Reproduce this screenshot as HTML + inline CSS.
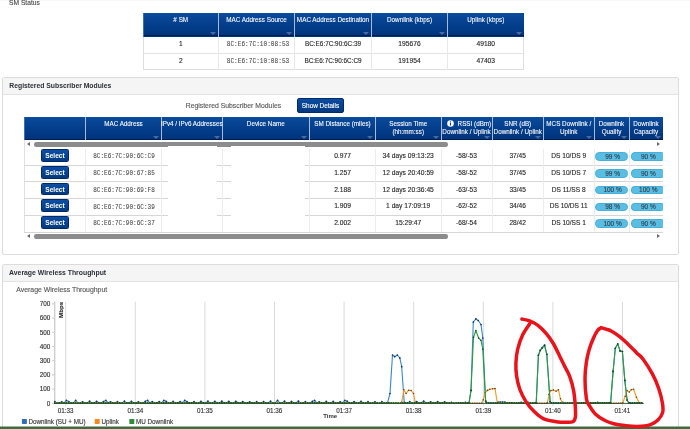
<!DOCTYPE html>
<html><head><meta charset="utf-8"><style>
*{box-sizing:border-box;margin:0;padding:0}
html,body{width:690px;height:429px;overflow:hidden;background:#fff;font-family:"Liberation Sans",sans-serif;color:#333}
body{position:relative}
.a{position:absolute}
.t{position:absolute;white-space:nowrap;line-height:1}
</style></head><body>
<div style="position:absolute;left:0;top:0;width:690px;height:429px;filter:blur(0.45px)">
<div class="a" style="left:0.00px;top:0.00px;width:690.00px;height:1.00px;background:#f7f7f7;"></div>
<div class="t" style="left:9.00px;top:0.08px;font-size:6.7px;color:#4a4a4a;font-weight:normal;font-family:'Liberation Sans';-webkit-text-stroke:0.12px #4a4a4a;">SM Status</div>
<div class="a" style="left:143.00px;top:13.00px;width:381.00px;height:23.50px;background:linear-gradient(#0a4b9c,#033e8b 50%,#00337b);"></div>
<div class="a" style="left:143.00px;top:13.00px;width:381.00px;height:1.00px;background:#0a4e9f;"></div>
<div class="a" style="left:143.00px;top:35.10px;width:381.00px;height:1.40px;background:#001c55;"></div>
<div class="a" style="left:143.00px;top:13.00px;width:1.00px;height:23.50px;background:#3f6fb0;"></div>
<div class="a" style="left:218.00px;top:13.00px;width:1.00px;height:23.50px;background:#a9bad6;"></div>
<div class="a" style="left:294.00px;top:13.00px;width:1.00px;height:23.50px;background:#a9bad6;"></div>
<div class="a" style="left:371.00px;top:13.00px;width:1.00px;height:23.50px;background:#a9bad6;"></div>
<div class="a" style="left:447.00px;top:13.00px;width:1.00px;height:23.50px;background:#a9bad6;"></div>
<div class="a" style="left:210.00px;top:32.00px;width:0;height:0;border-left:3px solid transparent;border-right:3px solid transparent;border-top:3px solid #4a6aa0"></div>
<div class="a" style="left:286.00px;top:32.00px;width:0;height:0;border-left:3px solid transparent;border-right:3px solid transparent;border-top:3px solid #4a6aa0"></div>
<div class="a" style="left:363.00px;top:32.00px;width:0;height:0;border-left:3px solid transparent;border-right:3px solid transparent;border-top:3px solid #4a6aa0"></div>
<div class="a" style="left:439.00px;top:32.00px;width:0;height:0;border-left:3px solid transparent;border-right:3px solid transparent;border-top:3px solid #4a6aa0"></div>
<div class="a" style="left:515.50px;top:32.00px;width:0;height:0;border-left:3px solid transparent;border-right:3px solid transparent;border-top:3px solid #4a6aa0"></div>
<div class="t" style="left:-19.25px;width:400px;text-align:center;top:16.75px;font-size:6.35px;color:#fff;font-weight:normal;font-family:'Liberation Sans';-webkit-text-stroke:0.08px #fff;"># SM</div>
<div class="t" style="left:56.50px;width:400px;text-align:center;top:16.75px;font-size:6.35px;color:#fff;font-weight:normal;font-family:'Liberation Sans';-webkit-text-stroke:0.08px #fff;">MAC Address Source</div>
<div class="t" style="left:133.00px;width:400px;text-align:center;top:16.75px;font-size:6.35px;color:#fff;font-weight:normal;font-family:'Liberation Sans';-webkit-text-stroke:0.08px #fff;">MAC Address Destination</div>
<div class="t" style="left:209.50px;width:400px;text-align:center;top:16.75px;font-size:6.35px;color:#fff;font-weight:normal;font-family:'Liberation Sans';-webkit-text-stroke:0.08px #fff;">Downlink (kbps)</div>
<div class="t" style="left:285.75px;width:400px;text-align:center;top:16.75px;font-size:6.35px;color:#fff;font-weight:normal;font-family:'Liberation Sans';-webkit-text-stroke:0.08px #fff;">Uplink (kbps)</div>
<div class="a" style="left:143.00px;top:36.50px;width:381.00px;height:33.50px;border:1px solid #dedede;border-top:none;"></div>
<div class="a" style="left:143.00px;top:53.00px;width:381.00px;height:1.00px;background:#e3e3e3;"></div>
<div class="a" style="left:218.00px;top:36.50px;width:1.00px;height:33.50px;background:#e8e8e8;"></div>
<div class="a" style="left:294.00px;top:36.50px;width:1.00px;height:33.50px;background:#e8e8e8;"></div>
<div class="a" style="left:371.00px;top:36.50px;width:1.00px;height:33.50px;background:#e8e8e8;"></div>
<div class="a" style="left:447.00px;top:36.50px;width:1.00px;height:33.50px;background:#e8e8e8;"></div>
<div class="t" style="left:-19.25px;width:400px;text-align:center;top:41.23px;font-size:6.6px;color:#262626;font-weight:normal;font-family:'Liberation Sans';-webkit-text-stroke:0.12px #262626;">1</div>
<div class="t" style="left:57.50px;width:400px;text-align:center;top:41.34px;font-size:7.0px;color:#444;font-weight:normal;font-family:'Liberation Mono';transform:scaleX(0.875);-webkit-text-stroke:0.06px #444;">8C:E6:7C:10:08:53</div>
<div class="t" style="left:133.00px;width:400px;text-align:center;top:41.33px;font-size:6.4px;color:#262626;font-weight:normal;font-family:'Liberation Sans';-webkit-text-stroke:0.12px #262626;">BC:E6:7C:90:6C:39</div>
<div class="t" style="left:209.50px;width:400px;text-align:center;top:41.18px;font-size:6.7px;color:#262626;font-weight:normal;font-family:'Liberation Sans';-webkit-text-stroke:0.12px #262626;">195676</div>
<div class="t" style="left:285.75px;width:400px;text-align:center;top:41.18px;font-size:6.7px;color:#262626;font-weight:normal;font-family:'Liberation Sans';-webkit-text-stroke:0.12px #262626;">49180</div>
<div class="t" style="left:-19.25px;width:400px;text-align:center;top:57.93px;font-size:6.6px;color:#262626;font-weight:normal;font-family:'Liberation Sans';-webkit-text-stroke:0.12px #262626;">2</div>
<div class="t" style="left:57.50px;width:400px;text-align:center;top:58.04px;font-size:7.0px;color:#444;font-weight:normal;font-family:'Liberation Mono';transform:scaleX(0.875);-webkit-text-stroke:0.06px #444;">8C:E6:7C:10:08:53</div>
<div class="t" style="left:133.00px;width:400px;text-align:center;top:58.03px;font-size:6.4px;color:#262626;font-weight:normal;font-family:'Liberation Sans';-webkit-text-stroke:0.12px #262626;">BC:E6:7C:90:6C:C9</div>
<div class="t" style="left:209.50px;width:400px;text-align:center;top:57.88px;font-size:6.7px;color:#262626;font-weight:normal;font-family:'Liberation Sans';-webkit-text-stroke:0.12px #262626;">191954</div>
<div class="t" style="left:285.75px;width:400px;text-align:center;top:57.88px;font-size:6.7px;color:#262626;font-weight:normal;font-family:'Liberation Sans';-webkit-text-stroke:0.12px #262626;">47403</div>
<div class="a" style="left:1.50px;top:77.00px;width:677.00px;height:178.00px;border:1px solid #dcdcdc;border-radius:2px;background:#fff;"></div>
<div class="a" style="left:2.50px;top:78.00px;width:675.00px;height:16.50px;background:#f5f5f5;border-bottom:1px solid #e3e3e3;"></div>
<div class="t" style="left:9.30px;top:83.24px;font-size:6.8px;color:#2a2f38;font-weight:bold;font-family:'Liberation Sans';">Registered Subscriber Modules</div>
<div class="t" style="left:185.70px;top:102.71px;font-size:6.85px;color:#555;font-weight:normal;font-family:'Liberation Sans';-webkit-text-stroke:0.12px #555;">Registered Subscriber Modules</div>
<div class="a" style="left:296.70px;top:98.20px;width:47.70px;height:15.00px;background:linear-gradient(#0b4da2,#03397f);border:1px solid #002a68;border-radius:2px;"></div>
<div class="t" style="left:120.50px;width:400px;text-align:center;top:102.73px;font-size:6.4px;color:#fff;font-weight:normal;font-family:'Liberation Sans';-webkit-text-stroke:0.12px #fff;">Show Details</div>
<div class="a" style="left:24.00px;top:117.00px;width:639.00px;height:23.00px;background:linear-gradient(#0a4b9c,#033e8b 50%,#00337b);"></div>
<div class="a" style="left:24.00px;top:117.00px;width:639.00px;height:1.00px;background:#0a4e9f;"></div>
<div class="a" style="left:24.00px;top:138.60px;width:639.00px;height:1.40px;background:#001c55;"></div>
<div class="a" style="left:24.00px;top:117.00px;width:1.00px;height:23.00px;background:#3f6fb0;"></div>
<div class="a" style="left:85.00px;top:117.00px;width:1.00px;height:23.00px;background:#a9bad6;"></div>
<div class="a" style="left:161.00px;top:117.00px;width:1.00px;height:23.00px;background:#a9bad6;"></div>
<div class="a" style="left:221.50px;top:117.00px;width:1.00px;height:23.00px;background:#a9bad6;"></div>
<div class="a" style="left:309.00px;top:117.00px;width:1.00px;height:23.00px;background:#a9bad6;"></div>
<div class="a" style="left:375.00px;top:117.00px;width:1.00px;height:23.00px;background:#a9bad6;"></div>
<div class="a" style="left:440.50px;top:117.00px;width:1.00px;height:23.00px;background:#a9bad6;"></div>
<div class="a" style="left:491.50px;top:117.00px;width:1.00px;height:23.00px;background:#a9bad6;"></div>
<div class="a" style="left:543.00px;top:117.00px;width:1.00px;height:23.00px;background:#a9bad6;"></div>
<div class="a" style="left:593.50px;top:117.00px;width:1.00px;height:23.00px;background:#a9bad6;"></div>
<div class="a" style="left:628.50px;top:117.00px;width:1.00px;height:23.00px;background:#a9bad6;"></div>
<div class="a" style="left:153.00px;top:135.50px;width:0;height:0;border-left:3px solid transparent;border-right:3px solid transparent;border-top:3px solid #4a6aa0"></div>
<div class="a" style="left:213.50px;top:135.50px;width:0;height:0;border-left:3px solid transparent;border-right:3px solid transparent;border-top:3px solid #4a6aa0"></div>
<div class="a" style="left:301.00px;top:135.50px;width:0;height:0;border-left:3px solid transparent;border-right:3px solid transparent;border-top:3px solid #4a6aa0"></div>
<div class="a" style="left:367.00px;top:135.50px;width:0;height:0;border-left:3px solid transparent;border-right:3px solid transparent;border-top:3px solid #4a6aa0"></div>
<div class="a" style="left:432.50px;top:135.50px;width:0;height:0;border-left:3px solid transparent;border-right:3px solid transparent;border-top:3px solid #4a6aa0"></div>
<div class="a" style="left:483.50px;top:135.50px;width:0;height:0;border-left:3px solid transparent;border-right:3px solid transparent;border-top:3px solid #4a6aa0"></div>
<div class="a" style="left:535.00px;top:135.50px;width:0;height:0;border-left:3px solid transparent;border-right:3px solid transparent;border-top:3px solid #4a6aa0"></div>
<div class="a" style="left:585.50px;top:135.50px;width:0;height:0;border-left:3px solid transparent;border-right:3px solid transparent;border-top:3px solid #4a6aa0"></div>
<div class="a" style="left:620.50px;top:135.50px;width:0;height:0;border-left:3px solid transparent;border-right:3px solid transparent;border-top:3px solid #4a6aa0"></div>
<div class="a" style="left:654.50px;top:135.50px;width:0;height:0;border-left:3px solid transparent;border-right:3px solid transparent;border-top:3px solid #4a6aa0"></div>
<div class="t" style="left:-76.50px;width:400px;text-align:center;top:120.68px;font-size:6.3px;color:#fff;font-weight:normal;font-family:'Liberation Sans';-webkit-text-stroke:0.08px #fff;">MAC Address</div>
<div class="t" style="left:-8.25px;width:400px;text-align:center;top:120.68px;font-size:6.3px;color:#fff;font-weight:normal;font-family:'Liberation Sans';-webkit-text-stroke:0.08px #fff;">IPv4 / IPv6 Addresses</div>
<div class="t" style="left:65.75px;width:400px;text-align:center;top:120.68px;font-size:6.3px;color:#fff;font-weight:normal;font-family:'Liberation Sans';-webkit-text-stroke:0.08px #fff;">Device Name</div>
<div class="t" style="left:142.50px;width:400px;text-align:center;top:120.68px;font-size:6.3px;color:#fff;font-weight:normal;font-family:'Liberation Sans';-webkit-text-stroke:0.08px #fff;">SM Distance (miles)</div>
<div class="t" style="left:208.25px;width:400px;text-align:center;top:120.68px;font-size:6.3px;color:#fff;font-weight:normal;font-family:'Liberation Sans';-webkit-text-stroke:0.08px #fff;">Session Time</div>
<div class="t" style="left:208.25px;width:400px;text-align:center;top:129.18px;font-size:6.3px;color:#fff;font-weight:normal;font-family:'Liberation Sans';-webkit-text-stroke:0.08px #fff;">(hh:mm:ss)</div>
<div class="t" style="left:457.60px;top:120.68px;font-size:6.3px;color:#fff;font-weight:normal;font-family:'Liberation Sans';-webkit-text-stroke:0.08px #fff;">RSSI (dBm)</div>
<div class="t" style="left:266.50px;width:400px;text-align:center;top:129.18px;font-size:6.3px;color:#fff;font-weight:normal;font-family:'Liberation Sans';-webkit-text-stroke:0.08px #fff;">Downlink / Uplink</div>
<div class="t" style="left:317.75px;width:400px;text-align:center;top:120.68px;font-size:6.3px;color:#fff;font-weight:normal;font-family:'Liberation Sans';-webkit-text-stroke:0.08px #fff;">SNR (dB)</div>
<div class="t" style="left:317.75px;width:400px;text-align:center;top:129.18px;font-size:6.3px;color:#fff;font-weight:normal;font-family:'Liberation Sans';-webkit-text-stroke:0.08px #fff;">Downlink / Uplink</div>
<div class="t" style="left:368.75px;width:400px;text-align:center;top:120.68px;font-size:6.3px;color:#fff;font-weight:normal;font-family:'Liberation Sans';-webkit-text-stroke:0.08px #fff;">MCS Downlink /</div>
<div class="t" style="left:368.75px;width:400px;text-align:center;top:129.18px;font-size:6.3px;color:#fff;font-weight:normal;font-family:'Liberation Sans';-webkit-text-stroke:0.08px #fff;">Uplink</div>
<div class="t" style="left:411.50px;width:400px;text-align:center;top:120.68px;font-size:6.3px;color:#fff;font-weight:normal;font-family:'Liberation Sans';-webkit-text-stroke:0.08px #fff;">Downlink</div>
<div class="t" style="left:411.50px;width:400px;text-align:center;top:129.18px;font-size:6.3px;color:#fff;font-weight:normal;font-family:'Liberation Sans';-webkit-text-stroke:0.08px #fff;">Quality</div>
<div class="t" style="left:446.00px;width:400px;text-align:center;top:120.68px;font-size:6.3px;color:#fff;font-weight:normal;font-family:'Liberation Sans';-webkit-text-stroke:0.08px #fff;">Downlink</div>
<div class="t" style="left:446.00px;width:400px;text-align:center;top:129.18px;font-size:6.3px;color:#fff;font-weight:normal;font-family:'Liberation Sans';-webkit-text-stroke:0.08px #fff;">Capacity</div>
<svg class="a" style="left:446.8px;top:120.4px" width="7" height="7" viewBox="0 0 14 14"><circle cx="7" cy="7" r="6.6" fill="#fff"/><circle cx="7" cy="3.8" r="1.3" fill="#0a3f85"/><rect x="5.9" y="5.9" width="2.2" height="5.2" fill="#0a3f85"/></svg>
<div class="a" style="left:26.8px;top:142.20px;width:0;height:0;border-top:2.4px solid transparent;border-bottom:2.4px solid transparent;border-right:3.6px solid #6a6a6a"></div>
<div class="a" style="left:33.80px;top:142.40px;width:414.70px;height:4.40px;background:#8c8c8c;border-radius:2.2px;"></div>
<div class="a" style="left:657.2px;top:142.20px;width:0;height:0;border-top:2.4px solid transparent;border-bottom:2.4px solid transparent;border-left:3.6px solid #6a6a6a"></div>
<div class="a" style="left:26.8px;top:234.20px;width:0;height:0;border-top:2.4px solid transparent;border-bottom:2.4px solid transparent;border-right:3.6px solid #6a6a6a"></div>
<div class="a" style="left:33.80px;top:234.40px;width:414.70px;height:4.40px;background:#8c8c8c;border-radius:2.2px;"></div>
<div class="a" style="left:657.2px;top:234.20px;width:0;height:0;border-top:2.4px solid transparent;border-bottom:2.4px solid transparent;border-left:3.6px solid #6a6a6a"></div>
<div class="a" style="left:24.00px;top:140.00px;width:639.00px;height:92.25px;border-left:1px solid #e0e0e0;"></div>
<div class="a" style="left:24.00px;top:165.00px;width:639.00px;height:1.00px;background:#d6d6d6;"></div>
<div class="a" style="left:24.00px;top:181.00px;width:639.00px;height:1.00px;background:#d6d6d6;"></div>
<div class="a" style="left:24.00px;top:198.00px;width:639.00px;height:1.00px;background:#d6d6d6;"></div>
<div class="a" style="left:24.00px;top:215.00px;width:639.00px;height:1.00px;background:#d6d6d6;"></div>
<div class="a" style="left:24.00px;top:232.00px;width:639.00px;height:1.00px;background:#d6d6d6;"></div>
<div class="a" style="left:85.00px;top:148.50px;width:1.00px;height:83.75px;background:#ececec;"></div>
<div class="a" style="left:161.00px;top:148.50px;width:1.00px;height:83.75px;background:#ececec;"></div>
<div class="a" style="left:221.50px;top:148.50px;width:1.00px;height:83.75px;background:#ececec;"></div>
<div class="a" style="left:309.00px;top:148.50px;width:1.00px;height:83.75px;background:#ececec;"></div>
<div class="a" style="left:375.00px;top:148.50px;width:1.00px;height:83.75px;background:#ececec;"></div>
<div class="a" style="left:440.50px;top:148.50px;width:1.00px;height:83.75px;background:#ececec;"></div>
<div class="a" style="left:491.50px;top:148.50px;width:1.00px;height:83.75px;background:#ececec;"></div>
<div class="a" style="left:543.00px;top:148.50px;width:1.00px;height:83.75px;background:#ececec;"></div>
<div class="a" style="left:593.50px;top:148.50px;width:1.00px;height:83.75px;background:#ececec;"></div>
<div class="a" style="left:628.50px;top:148.50px;width:1.00px;height:83.75px;background:#ececec;"></div>
<div class="a" style="left:41.20px;top:149.20px;width:27.70px;height:12.60px;background:linear-gradient(#0d4fa5,#033a80);border:1px solid #00296a;border-radius:1.5px;"></div>
<div class="t" style="left:-145.00px;width:400px;text-align:center;top:153.03px;font-size:6.6px;color:#fff;font-weight:bold;font-family:'Liberation Sans';">Select</div>
<div class="t" style="left:-76.00px;width:400px;text-align:center;top:153.36px;font-size:6.9px;color:#444;font-weight:normal;font-family:'Liberation Mono';transform:scaleX(0.875);-webkit-text-stroke:0.06px #444;">8C:E6:7C:90:6C:C9</div>
<div class="t" style="left:142.50px;width:400px;text-align:center;top:153.16px;font-size:6.7px;color:#262626;font-weight:normal;font-family:'Liberation Sans';-webkit-text-stroke:0.12px #262626;">0.977</div>
<div class="t" style="left:208.20px;width:400px;text-align:center;top:153.16px;font-size:6.7px;color:#262626;font-weight:normal;font-family:'Liberation Sans';-webkit-text-stroke:0.12px #262626;">34 days 09:13:23</div>
<div class="t" style="left:266.50px;width:400px;text-align:center;top:153.21px;font-size:6.6px;color:#262626;font-weight:normal;font-family:'Liberation Sans';-webkit-text-stroke:0.12px #262626;">-58/-53</div>
<div class="t" style="left:317.70px;width:400px;text-align:center;top:153.21px;font-size:6.6px;color:#262626;font-weight:normal;font-family:'Liberation Sans';-webkit-text-stroke:0.12px #262626;">37/45</div>
<div class="t" style="left:368.70px;width:400px;text-align:center;top:153.21px;font-size:6.6px;color:#262626;font-weight:normal;font-family:'Liberation Sans';-webkit-text-stroke:0.12px #262626;">DS 10/DS 9</div>
<div class="a" style="left:595.2px;top:152.38px;width:33px;height:8.4px;border-radius:4.2px;background:#5bbde2;border:0.8px solid #45b0dc"></div>
<div class="t" style="left:412.60px;width:400px;text-align:center;top:153.85px;font-size:6.5px;color:#2b3f4c;font-weight:normal;font-family:'Liberation Sans';-webkit-text-stroke:0.12px #2b3f4c;">99 %</div>
<div class="a" style="left:631.2px;top:152.38px;width:31.8px;height:8.4px;border-radius:4.2px 1.5px 1.5px 4.2px;background:#5bbde2;border:0.8px solid #45b0dc;border-right:none"></div>
<div class="t" style="left:448.30px;width:400px;text-align:center;top:153.85px;font-size:6.5px;color:#2b3f4c;font-weight:normal;font-family:'Liberation Sans';-webkit-text-stroke:0.12px #2b3f4c;">90 %</div>
<div class="a" style="left:41.20px;top:165.95px;width:27.70px;height:12.60px;background:linear-gradient(#0d4fa5,#033a80);border:1px solid #00296a;border-radius:1.5px;"></div>
<div class="t" style="left:-145.00px;width:400px;text-align:center;top:169.78px;font-size:6.6px;color:#fff;font-weight:bold;font-family:'Liberation Sans';">Select</div>
<div class="t" style="left:-76.00px;width:400px;text-align:center;top:170.11px;font-size:6.9px;color:#444;font-weight:normal;font-family:'Liberation Mono';transform:scaleX(0.875);-webkit-text-stroke:0.06px #444;">8C:E6:7C:90:67:85</div>
<div class="t" style="left:142.50px;width:400px;text-align:center;top:169.91px;font-size:6.7px;color:#262626;font-weight:normal;font-family:'Liberation Sans';-webkit-text-stroke:0.12px #262626;">1.257</div>
<div class="t" style="left:208.20px;width:400px;text-align:center;top:169.91px;font-size:6.7px;color:#262626;font-weight:normal;font-family:'Liberation Sans';-webkit-text-stroke:0.12px #262626;">12 days 20:40:59</div>
<div class="t" style="left:266.50px;width:400px;text-align:center;top:169.96px;font-size:6.6px;color:#262626;font-weight:normal;font-family:'Liberation Sans';-webkit-text-stroke:0.12px #262626;">-58/-52</div>
<div class="t" style="left:317.70px;width:400px;text-align:center;top:169.96px;font-size:6.6px;color:#262626;font-weight:normal;font-family:'Liberation Sans';-webkit-text-stroke:0.12px #262626;">37/45</div>
<div class="t" style="left:368.70px;width:400px;text-align:center;top:169.96px;font-size:6.6px;color:#262626;font-weight:normal;font-family:'Liberation Sans';-webkit-text-stroke:0.12px #262626;">DS 10/DS 7</div>
<div class="a" style="left:595.2px;top:169.12px;width:33px;height:8.4px;border-radius:4.2px;background:#5bbde2;border:0.8px solid #45b0dc"></div>
<div class="t" style="left:412.60px;width:400px;text-align:center;top:170.60px;font-size:6.5px;color:#2b3f4c;font-weight:normal;font-family:'Liberation Sans';-webkit-text-stroke:0.12px #2b3f4c;">99 %</div>
<div class="a" style="left:631.2px;top:169.12px;width:31.8px;height:8.4px;border-radius:4.2px 1.5px 1.5px 4.2px;background:#5bbde2;border:0.8px solid #45b0dc;border-right:none"></div>
<div class="t" style="left:448.30px;width:400px;text-align:center;top:170.60px;font-size:6.5px;color:#2b3f4c;font-weight:normal;font-family:'Liberation Sans';-webkit-text-stroke:0.12px #2b3f4c;">90 %</div>
<div class="a" style="left:41.20px;top:182.70px;width:27.70px;height:12.60px;background:linear-gradient(#0d4fa5,#033a80);border:1px solid #00296a;border-radius:1.5px;"></div>
<div class="t" style="left:-145.00px;width:400px;text-align:center;top:186.53px;font-size:6.6px;color:#fff;font-weight:bold;font-family:'Liberation Sans';">Select</div>
<div class="t" style="left:-76.00px;width:400px;text-align:center;top:186.86px;font-size:6.9px;color:#444;font-weight:normal;font-family:'Liberation Mono';transform:scaleX(0.875);-webkit-text-stroke:0.06px #444;">8C:E6:7C:90:69:F8</div>
<div class="t" style="left:142.50px;width:400px;text-align:center;top:186.66px;font-size:6.7px;color:#262626;font-weight:normal;font-family:'Liberation Sans';-webkit-text-stroke:0.12px #262626;">2.188</div>
<div class="t" style="left:208.20px;width:400px;text-align:center;top:186.66px;font-size:6.7px;color:#262626;font-weight:normal;font-family:'Liberation Sans';-webkit-text-stroke:0.12px #262626;">12 days 20:36:45</div>
<div class="t" style="left:266.50px;width:400px;text-align:center;top:186.71px;font-size:6.6px;color:#262626;font-weight:normal;font-family:'Liberation Sans';-webkit-text-stroke:0.12px #262626;">-63/-53</div>
<div class="t" style="left:317.70px;width:400px;text-align:center;top:186.71px;font-size:6.6px;color:#262626;font-weight:normal;font-family:'Liberation Sans';-webkit-text-stroke:0.12px #262626;">33/45</div>
<div class="t" style="left:368.70px;width:400px;text-align:center;top:186.71px;font-size:6.6px;color:#262626;font-weight:normal;font-family:'Liberation Sans';-webkit-text-stroke:0.12px #262626;">DS 11/SS 8</div>
<div class="a" style="left:595.2px;top:185.88px;width:33px;height:8.4px;border-radius:4.2px;background:#5bbde2;border:0.8px solid #45b0dc"></div>
<div class="t" style="left:412.60px;width:400px;text-align:center;top:187.35px;font-size:6.5px;color:#2b3f4c;font-weight:normal;font-family:'Liberation Sans';-webkit-text-stroke:0.12px #2b3f4c;">100 %</div>
<div class="a" style="left:631.2px;top:185.88px;width:31.8px;height:8.4px;border-radius:4.2px 1.5px 1.5px 4.2px;background:#5bbde2;border:0.8px solid #45b0dc;border-right:none"></div>
<div class="t" style="left:448.30px;width:400px;text-align:center;top:187.35px;font-size:6.5px;color:#2b3f4c;font-weight:normal;font-family:'Liberation Sans';-webkit-text-stroke:0.12px #2b3f4c;">100 %</div>
<div class="a" style="left:41.20px;top:199.45px;width:27.70px;height:12.60px;background:linear-gradient(#0d4fa5,#033a80);border:1px solid #00296a;border-radius:1.5px;"></div>
<div class="t" style="left:-145.00px;width:400px;text-align:center;top:203.28px;font-size:6.6px;color:#fff;font-weight:bold;font-family:'Liberation Sans';">Select</div>
<div class="t" style="left:-76.00px;width:400px;text-align:center;top:203.61px;font-size:6.9px;color:#444;font-weight:normal;font-family:'Liberation Mono';transform:scaleX(0.875);-webkit-text-stroke:0.06px #444;">8C:E6:7C:90:6C:39</div>
<div class="t" style="left:142.50px;width:400px;text-align:center;top:203.41px;font-size:6.7px;color:#262626;font-weight:normal;font-family:'Liberation Sans';-webkit-text-stroke:0.12px #262626;">1.909</div>
<div class="t" style="left:208.20px;width:400px;text-align:center;top:203.41px;font-size:6.7px;color:#262626;font-weight:normal;font-family:'Liberation Sans';-webkit-text-stroke:0.12px #262626;">1 day 17:09:19</div>
<div class="t" style="left:266.50px;width:400px;text-align:center;top:203.46px;font-size:6.6px;color:#262626;font-weight:normal;font-family:'Liberation Sans';-webkit-text-stroke:0.12px #262626;">-62/-52</div>
<div class="t" style="left:317.70px;width:400px;text-align:center;top:203.46px;font-size:6.6px;color:#262626;font-weight:normal;font-family:'Liberation Sans';-webkit-text-stroke:0.12px #262626;">34/46</div>
<div class="t" style="left:368.70px;width:400px;text-align:center;top:203.46px;font-size:6.6px;color:#262626;font-weight:normal;font-family:'Liberation Sans';-webkit-text-stroke:0.12px #262626;">DS 10/DS 11</div>
<div class="a" style="left:595.2px;top:202.62px;width:33px;height:8.4px;border-radius:4.2px;background:#5bbde2;border:0.8px solid #45b0dc"></div>
<div class="t" style="left:412.60px;width:400px;text-align:center;top:204.10px;font-size:6.5px;color:#2b3f4c;font-weight:normal;font-family:'Liberation Sans';-webkit-text-stroke:0.12px #2b3f4c;">98 %</div>
<div class="a" style="left:631.2px;top:202.62px;width:31.8px;height:8.4px;border-radius:4.2px 1.5px 1.5px 4.2px;background:#5bbde2;border:0.8px solid #45b0dc;border-right:none"></div>
<div class="t" style="left:448.30px;width:400px;text-align:center;top:204.10px;font-size:6.5px;color:#2b3f4c;font-weight:normal;font-family:'Liberation Sans';-webkit-text-stroke:0.12px #2b3f4c;">90 %</div>
<div class="a" style="left:41.20px;top:216.20px;width:27.70px;height:12.60px;background:linear-gradient(#0d4fa5,#033a80);border:1px solid #00296a;border-radius:1.5px;"></div>
<div class="t" style="left:-145.00px;width:400px;text-align:center;top:220.03px;font-size:6.6px;color:#fff;font-weight:bold;font-family:'Liberation Sans';">Select</div>
<div class="t" style="left:-76.00px;width:400px;text-align:center;top:220.36px;font-size:6.9px;color:#444;font-weight:normal;font-family:'Liberation Mono';transform:scaleX(0.875);-webkit-text-stroke:0.06px #444;">8C:E6:7C:90:6C:37</div>
<div class="t" style="left:142.50px;width:400px;text-align:center;top:220.16px;font-size:6.7px;color:#262626;font-weight:normal;font-family:'Liberation Sans';-webkit-text-stroke:0.12px #262626;">2.002</div>
<div class="t" style="left:208.20px;width:400px;text-align:center;top:220.16px;font-size:6.7px;color:#262626;font-weight:normal;font-family:'Liberation Sans';-webkit-text-stroke:0.12px #262626;">15:29:47</div>
<div class="t" style="left:266.50px;width:400px;text-align:center;top:220.21px;font-size:6.6px;color:#262626;font-weight:normal;font-family:'Liberation Sans';-webkit-text-stroke:0.12px #262626;">-68/-54</div>
<div class="t" style="left:317.70px;width:400px;text-align:center;top:220.21px;font-size:6.6px;color:#262626;font-weight:normal;font-family:'Liberation Sans';-webkit-text-stroke:0.12px #262626;">28/42</div>
<div class="t" style="left:368.70px;width:400px;text-align:center;top:220.21px;font-size:6.6px;color:#262626;font-weight:normal;font-family:'Liberation Sans';-webkit-text-stroke:0.12px #262626;">DS 10/SS 1</div>
<div class="a" style="left:595.2px;top:219.38px;width:33px;height:8.4px;border-radius:4.2px;background:#5bbde2;border:0.8px solid #45b0dc"></div>
<div class="t" style="left:412.60px;width:400px;text-align:center;top:220.85px;font-size:6.5px;color:#2b3f4c;font-weight:normal;font-family:'Liberation Sans';-webkit-text-stroke:0.12px #2b3f4c;">100 %</div>
<div class="a" style="left:631.2px;top:219.38px;width:31.8px;height:8.4px;border-radius:4.2px 1.5px 1.5px 4.2px;background:#5bbde2;border:0.8px solid #45b0dc;border-right:none"></div>
<div class="t" style="left:448.30px;width:400px;text-align:center;top:220.85px;font-size:6.5px;color:#2b3f4c;font-weight:normal;font-family:'Liberation Sans';-webkit-text-stroke:0.12px #2b3f4c;">90 %</div>
<div class="a" style="left:168.00px;top:146.00px;width:49.00px;height:86.00px;background:#fff;"></div>
<div class="a" style="left:231.00px;top:146.00px;width:74.00px;height:86.00px;background:#fff;"></div>
<div class="a" style="left:1.50px;top:263.60px;width:677.30px;height:170.00px;border:1px solid #dcdcdc;border-radius:2px;background:#fff;"></div>
<div class="a" style="left:2.50px;top:264.60px;width:675.30px;height:17.00px;background:#f5f5f5;border-bottom:1px solid #e3e3e3;"></div>
<div class="t" style="left:9.10px;top:269.51px;font-size:6.85px;color:#2a2f38;font-weight:bold;font-family:'Liberation Sans';">Average Wireless Throughput</div>
<div class="t" style="left:16.30px;top:286.89px;font-size:6.9px;color:#555;font-weight:normal;font-family:'Liberation Sans';-webkit-text-stroke:0.12px #555;">Average Wireless Throughput</div>
<svg class="a" style="left:0;top:0" width="690" height="429" viewBox="0 0 690 429"><line x1="65.70" y1="301.7" x2="65.70" y2="406.3" stroke="#dadada" stroke-width="1"/><line x1="135.30" y1="301.7" x2="135.30" y2="406.3" stroke="#dadada" stroke-width="1"/><line x1="204.90" y1="301.7" x2="204.90" y2="406.3" stroke="#dadada" stroke-width="1"/><line x1="274.50" y1="301.7" x2="274.50" y2="406.3" stroke="#dadada" stroke-width="1"/><line x1="344.10" y1="301.7" x2="344.10" y2="406.3" stroke="#dadada" stroke-width="1"/><line x1="413.70" y1="301.7" x2="413.70" y2="406.3" stroke="#dadada" stroke-width="1"/><line x1="483.30" y1="301.7" x2="483.30" y2="406.3" stroke="#dadada" stroke-width="1"/><line x1="552.90" y1="301.7" x2="552.90" y2="406.3" stroke="#dadada" stroke-width="1"/><line x1="622.50" y1="301.7" x2="622.50" y2="406.3" stroke="#dadada" stroke-width="1"/><line x1="54.7" y1="301.4" x2="54.7" y2="403.6" stroke="#cfcfcf" stroke-width="1.4"/><line x1="52" y1="403.30" x2="54" y2="403.30" stroke="#bbb" stroke-width="0.8"/><text x="50.4" y="405.60" font-size="6.4" fill="#333" stroke="#333" stroke-width="0.14" text-anchor="end" font-family="Liberation Sans">0</text><line x1="52" y1="389.10" x2="54" y2="389.10" stroke="#bbb" stroke-width="0.8"/><text x="50.4" y="391.40" font-size="6.4" fill="#333" stroke="#333" stroke-width="0.14" text-anchor="end" font-family="Liberation Sans">100</text><line x1="52" y1="374.90" x2="54" y2="374.90" stroke="#bbb" stroke-width="0.8"/><text x="50.4" y="377.20" font-size="6.4" fill="#333" stroke="#333" stroke-width="0.14" text-anchor="end" font-family="Liberation Sans">200</text><line x1="52" y1="360.70" x2="54" y2="360.70" stroke="#bbb" stroke-width="0.8"/><text x="50.4" y="363.00" font-size="6.4" fill="#333" stroke="#333" stroke-width="0.14" text-anchor="end" font-family="Liberation Sans">300</text><line x1="52" y1="346.50" x2="54" y2="346.50" stroke="#bbb" stroke-width="0.8"/><text x="50.4" y="348.80" font-size="6.4" fill="#333" stroke="#333" stroke-width="0.14" text-anchor="end" font-family="Liberation Sans">400</text><line x1="52" y1="332.30" x2="54" y2="332.30" stroke="#bbb" stroke-width="0.8"/><text x="50.4" y="334.60" font-size="6.4" fill="#333" stroke="#333" stroke-width="0.14" text-anchor="end" font-family="Liberation Sans">500</text><line x1="52" y1="318.10" x2="54" y2="318.10" stroke="#bbb" stroke-width="0.8"/><text x="50.4" y="320.40" font-size="6.4" fill="#333" stroke="#333" stroke-width="0.14" text-anchor="end" font-family="Liberation Sans">600</text><line x1="52" y1="303.90" x2="54" y2="303.90" stroke="#bbb" stroke-width="0.8"/><text x="50.4" y="306.20" font-size="6.4" fill="#333" stroke="#333" stroke-width="0.14" text-anchor="end" font-family="Liberation Sans">700</text><text x="65.70" y="412.70" font-size="6.3" fill="#333" stroke="#333" stroke-width="0.14" text-anchor="middle" font-family="Liberation Sans">01:33</text><text x="135.30" y="412.70" font-size="6.3" fill="#333" stroke="#333" stroke-width="0.14" text-anchor="middle" font-family="Liberation Sans">01:34</text><text x="204.90" y="412.70" font-size="6.3" fill="#333" stroke="#333" stroke-width="0.14" text-anchor="middle" font-family="Liberation Sans">01:35</text><text x="274.50" y="412.70" font-size="6.3" fill="#333" stroke="#333" stroke-width="0.14" text-anchor="middle" font-family="Liberation Sans">01:36</text><text x="344.10" y="412.70" font-size="6.3" fill="#333" stroke="#333" stroke-width="0.14" text-anchor="middle" font-family="Liberation Sans">01:37</text><text x="413.70" y="412.70" font-size="6.3" fill="#333" stroke="#333" stroke-width="0.14" text-anchor="middle" font-family="Liberation Sans">01:38</text><text x="483.30" y="412.70" font-size="6.3" fill="#333" stroke="#333" stroke-width="0.14" text-anchor="middle" font-family="Liberation Sans">01:39</text><text x="552.90" y="412.70" font-size="6.3" fill="#333" stroke="#333" stroke-width="0.14" text-anchor="middle" font-family="Liberation Sans">01:40</text><text x="622.50" y="412.70" font-size="6.3" fill="#333" stroke="#333" stroke-width="0.14" text-anchor="middle" font-family="Liberation Sans">01:41</text><text x="330.2" y="418" font-size="6" fill="#333" font-weight="bold" text-anchor="middle" font-family="Liberation Sans">Time</text><text transform="translate(62.6,309.8) rotate(-90)" font-size="6.2" fill="#1a1a1a" stroke="#1a1a1a" stroke-width="0.1" font-weight="bold" text-anchor="middle" font-family="Liberation Sans">Mbps</text><polyline points="54.80,401.54 57.12,403.14 59.44,402.94 61.76,401.74 64.08,402.99 66.40,400.40 68.72,401.51 71.04,403.18 73.36,403.00 75.68,400.40 78.00,403.19 80.32,403.03 82.64,401.74 84.96,403.16 87.28,403.03 89.60,401.14 91.92,403.15 94.24,403.11 96.56,401.30 98.88,402.82 101.20,402.97 103.52,401.48 105.84,400.40 108.16,402.81 110.48,401.76 112.80,402.86 115.12,403.08 117.44,401.68 119.76,403.15 122.08,403.08 124.40,401.15 126.72,403.13 129.04,402.97 131.36,401.29 133.68,403.05 136.00,402.98 138.32,401.75 140.64,403.18 142.96,403.12 145.28,401.26 147.60,400.40 149.92,403.03 152.24,401.55 154.56,402.97 156.88,403.02 159.20,401.56 161.52,402.88 163.84,400.40 166.16,401.24 168.48,403.10 170.80,402.97 173.12,401.38 175.44,402.85 177.76,402.91 180.08,401.57 182.40,402.81 184.72,400.40 187.04,401.71 189.36,403.03 191.68,402.90 194.00,401.68 196.32,403.00 198.64,403.18 200.96,401.27 203.28,402.89 205.60,402.97 207.92,401.10 210.24,403.07 212.56,402.92 214.88,401.32 217.20,402.97 219.52,403.02 221.84,401.13 224.16,402.82 226.48,403.01 228.80,401.27 231.12,403.18 233.44,402.92 235.76,401.28 238.08,402.80 240.40,402.87 242.72,401.57 245.04,403.05 247.36,402.93 249.68,401.78 252.00,403.02 254.32,403.13 256.64,401.71 258.96,403.18 261.28,402.89 263.60,401.70 265.92,403.10 268.24,403.04 270.56,401.10 272.88,403.17 275.20,403.02 277.52,400.40 279.84,402.98 282.16,402.85 284.48,401.14 286.80,402.85 289.12,403.09 291.44,401.47 293.76,403.06 296.08,402.85 298.40,401.03 300.72,403.14 303.04,403.13 305.36,401.61 307.68,403.11 310.00,403.01 312.32,401.33 314.64,400.40 316.96,403.09 319.28,401.80 321.60,403.03 323.92,403.05 326.24,401.35 328.56,402.82 330.88,402.92 333.20,401.39 335.52,402.95 337.84,402.93 340.16,401.76 342.48,402.84 344.80,400.40 347.12,401.18 349.44,402.85 351.76,402.88 354.08,401.49 356.40,403.04 358.72,403.16 361.04,401.29 363.36,403.18 365.68,403.17 368.00,401.63 370.32,403.14 372.64,403.06 374.96,401.76 377.28,403.20 379.60,403.14 381.92,401.72 384.24,403.05 386.56,403.19 387.60,402.60 390.00,393.50 392.50,355.00 394.70,356.70 397.30,355.00 399.80,357.90 401.70,366.70 404.20,402.30 405.12,402.85 407.44,402.95 409.76,401.68 412.08,403.10 414.40,403.06 416.72,401.51 419.04,403.15 421.36,402.86 423.68,401.01 426.00,403.01 428.32,403.01 430.64,401.73 432.96,403.16 435.28,403.06 437.60,401.59 439.92,402.87 442.24,403.14 444.56,401.78 446.88,402.91 449.20,403.04 451.52,402.30 453.84,403.04 456.16,403.19 458.48,402.91 460.80,402.94 463.12,402.99 465.44,402.30 467.76,403.09 469.00,403.00 471.00,390.40 473.30,322.10 475.90,318.90 478.20,320.50 481.00,324.50 482.80,338.00 485.60,401.00 486.32,402.30 488.64,402.97 490.96,403.04 493.28,403.10 495.60,403.13 497.92,402.00 500.24,402.00 502.56,402.00 504.88,402.00 507.20,402.90 509.52,402.94 511.84,402.96 514.16,402.98 516.48,403.13 518.80,403.04 521.12,402.30 523.44,403.19 525.76,403.19 528.08,402.30 530.40,403.12 532.72,402.99 535.04,403.07 536.20,403.10 538.40,355.20 540.30,350.00 542.10,347.60 544.60,345.00 546.80,354.30 550.10,401.80 551.28,402.92 553.60,402.90 555.92,403.09 558.24,403.13 560.56,403.13 562.88,402.30 565.20,403.14 567.52,403.01 569.84,402.95 572.16,403.06 574.48,403.00 576.80,403.17 579.12,403.00 581.44,402.93 583.76,402.97 586.08,403.06 588.40,403.15 590.72,403.10 593.04,402.96 595.36,402.91 597.68,402.30 600.00,403.08 602.32,402.92 604.64,403.15 606.96,403.16 609.28,403.15 610.60,403.10 613.10,371.40 615.30,348.30 617.70,344.00 620.10,350.90 622.40,351.50 624.80,380.40 627.10,400.00 628.90,403.10 630.16,402.93 632.48,403.16 634.80,402.95 637.12,402.91 639.44,403.09 641.76,403.04" fill="none" stroke="#3a86c8" stroke-width="1.1" stroke-linejoin="round"/><circle cx="54.80" cy="401.54" r="0.85" fill="#1b3560"/><circle cx="57.12" cy="403.14" r="0.85" fill="#1b3560"/><circle cx="59.44" cy="402.94" r="0.85" fill="#1b3560"/><circle cx="61.76" cy="401.74" r="0.85" fill="#1b3560"/><circle cx="64.08" cy="402.99" r="0.85" fill="#1b3560"/><circle cx="66.40" cy="400.40" r="0.85" fill="#1b3560"/><circle cx="68.72" cy="401.51" r="0.85" fill="#1b3560"/><circle cx="71.04" cy="403.18" r="0.85" fill="#1b3560"/><circle cx="73.36" cy="403.00" r="0.85" fill="#1b3560"/><circle cx="75.68" cy="400.40" r="0.85" fill="#1b3560"/><circle cx="78.00" cy="403.19" r="0.85" fill="#1b3560"/><circle cx="80.32" cy="403.03" r="0.85" fill="#1b3560"/><circle cx="82.64" cy="401.74" r="0.85" fill="#1b3560"/><circle cx="84.96" cy="403.16" r="0.85" fill="#1b3560"/><circle cx="87.28" cy="403.03" r="0.85" fill="#1b3560"/><circle cx="89.60" cy="401.14" r="0.85" fill="#1b3560"/><circle cx="91.92" cy="403.15" r="0.85" fill="#1b3560"/><circle cx="94.24" cy="403.11" r="0.85" fill="#1b3560"/><circle cx="96.56" cy="401.30" r="0.85" fill="#1b3560"/><circle cx="98.88" cy="402.82" r="0.85" fill="#1b3560"/><circle cx="101.20" cy="402.97" r="0.85" fill="#1b3560"/><circle cx="103.52" cy="401.48" r="0.85" fill="#1b3560"/><circle cx="105.84" cy="400.40" r="0.85" fill="#1b3560"/><circle cx="108.16" cy="402.81" r="0.85" fill="#1b3560"/><circle cx="110.48" cy="401.76" r="0.85" fill="#1b3560"/><circle cx="112.80" cy="402.86" r="0.85" fill="#1b3560"/><circle cx="115.12" cy="403.08" r="0.85" fill="#1b3560"/><circle cx="117.44" cy="401.68" r="0.85" fill="#1b3560"/><circle cx="119.76" cy="403.15" r="0.85" fill="#1b3560"/><circle cx="122.08" cy="403.08" r="0.85" fill="#1b3560"/><circle cx="124.40" cy="401.15" r="0.85" fill="#1b3560"/><circle cx="126.72" cy="403.13" r="0.85" fill="#1b3560"/><circle cx="129.04" cy="402.97" r="0.85" fill="#1b3560"/><circle cx="131.36" cy="401.29" r="0.85" fill="#1b3560"/><circle cx="133.68" cy="403.05" r="0.85" fill="#1b3560"/><circle cx="136.00" cy="402.98" r="0.85" fill="#1b3560"/><circle cx="138.32" cy="401.75" r="0.85" fill="#1b3560"/><circle cx="140.64" cy="403.18" r="0.85" fill="#1b3560"/><circle cx="142.96" cy="403.12" r="0.85" fill="#1b3560"/><circle cx="145.28" cy="401.26" r="0.85" fill="#1b3560"/><circle cx="147.60" cy="400.40" r="0.85" fill="#1b3560"/><circle cx="149.92" cy="403.03" r="0.85" fill="#1b3560"/><circle cx="152.24" cy="401.55" r="0.85" fill="#1b3560"/><circle cx="154.56" cy="402.97" r="0.85" fill="#1b3560"/><circle cx="156.88" cy="403.02" r="0.85" fill="#1b3560"/><circle cx="159.20" cy="401.56" r="0.85" fill="#1b3560"/><circle cx="161.52" cy="402.88" r="0.85" fill="#1b3560"/><circle cx="163.84" cy="400.40" r="0.85" fill="#1b3560"/><circle cx="166.16" cy="401.24" r="0.85" fill="#1b3560"/><circle cx="168.48" cy="403.10" r="0.85" fill="#1b3560"/><circle cx="170.80" cy="402.97" r="0.85" fill="#1b3560"/><circle cx="173.12" cy="401.38" r="0.85" fill="#1b3560"/><circle cx="175.44" cy="402.85" r="0.85" fill="#1b3560"/><circle cx="177.76" cy="402.91" r="0.85" fill="#1b3560"/><circle cx="180.08" cy="401.57" r="0.85" fill="#1b3560"/><circle cx="182.40" cy="402.81" r="0.85" fill="#1b3560"/><circle cx="184.72" cy="400.40" r="0.85" fill="#1b3560"/><circle cx="187.04" cy="401.71" r="0.85" fill="#1b3560"/><circle cx="189.36" cy="403.03" r="0.85" fill="#1b3560"/><circle cx="191.68" cy="402.90" r="0.85" fill="#1b3560"/><circle cx="194.00" cy="401.68" r="0.85" fill="#1b3560"/><circle cx="196.32" cy="403.00" r="0.85" fill="#1b3560"/><circle cx="198.64" cy="403.18" r="0.85" fill="#1b3560"/><circle cx="200.96" cy="401.27" r="0.85" fill="#1b3560"/><circle cx="203.28" cy="402.89" r="0.85" fill="#1b3560"/><circle cx="205.60" cy="402.97" r="0.85" fill="#1b3560"/><circle cx="207.92" cy="401.10" r="0.85" fill="#1b3560"/><circle cx="210.24" cy="403.07" r="0.85" fill="#1b3560"/><circle cx="212.56" cy="402.92" r="0.85" fill="#1b3560"/><circle cx="214.88" cy="401.32" r="0.85" fill="#1b3560"/><circle cx="217.20" cy="402.97" r="0.85" fill="#1b3560"/><circle cx="219.52" cy="403.02" r="0.85" fill="#1b3560"/><circle cx="221.84" cy="401.13" r="0.85" fill="#1b3560"/><circle cx="224.16" cy="402.82" r="0.85" fill="#1b3560"/><circle cx="226.48" cy="403.01" r="0.85" fill="#1b3560"/><circle cx="228.80" cy="401.27" r="0.85" fill="#1b3560"/><circle cx="231.12" cy="403.18" r="0.85" fill="#1b3560"/><circle cx="233.44" cy="402.92" r="0.85" fill="#1b3560"/><circle cx="235.76" cy="401.28" r="0.85" fill="#1b3560"/><circle cx="238.08" cy="402.80" r="0.85" fill="#1b3560"/><circle cx="240.40" cy="402.87" r="0.85" fill="#1b3560"/><circle cx="242.72" cy="401.57" r="0.85" fill="#1b3560"/><circle cx="245.04" cy="403.05" r="0.85" fill="#1b3560"/><circle cx="247.36" cy="402.93" r="0.85" fill="#1b3560"/><circle cx="249.68" cy="401.78" r="0.85" fill="#1b3560"/><circle cx="252.00" cy="403.02" r="0.85" fill="#1b3560"/><circle cx="254.32" cy="403.13" r="0.85" fill="#1b3560"/><circle cx="256.64" cy="401.71" r="0.85" fill="#1b3560"/><circle cx="258.96" cy="403.18" r="0.85" fill="#1b3560"/><circle cx="261.28" cy="402.89" r="0.85" fill="#1b3560"/><circle cx="263.60" cy="401.70" r="0.85" fill="#1b3560"/><circle cx="265.92" cy="403.10" r="0.85" fill="#1b3560"/><circle cx="268.24" cy="403.04" r="0.85" fill="#1b3560"/><circle cx="270.56" cy="401.10" r="0.85" fill="#1b3560"/><circle cx="272.88" cy="403.17" r="0.85" fill="#1b3560"/><circle cx="275.20" cy="403.02" r="0.85" fill="#1b3560"/><circle cx="277.52" cy="400.40" r="0.85" fill="#1b3560"/><circle cx="279.84" cy="402.98" r="0.85" fill="#1b3560"/><circle cx="282.16" cy="402.85" r="0.85" fill="#1b3560"/><circle cx="284.48" cy="401.14" r="0.85" fill="#1b3560"/><circle cx="286.80" cy="402.85" r="0.85" fill="#1b3560"/><circle cx="289.12" cy="403.09" r="0.85" fill="#1b3560"/><circle cx="291.44" cy="401.47" r="0.85" fill="#1b3560"/><circle cx="293.76" cy="403.06" r="0.85" fill="#1b3560"/><circle cx="296.08" cy="402.85" r="0.85" fill="#1b3560"/><circle cx="298.40" cy="401.03" r="0.85" fill="#1b3560"/><circle cx="300.72" cy="403.14" r="0.85" fill="#1b3560"/><circle cx="303.04" cy="403.13" r="0.85" fill="#1b3560"/><circle cx="305.36" cy="401.61" r="0.85" fill="#1b3560"/><circle cx="307.68" cy="403.11" r="0.85" fill="#1b3560"/><circle cx="310.00" cy="403.01" r="0.85" fill="#1b3560"/><circle cx="312.32" cy="401.33" r="0.85" fill="#1b3560"/><circle cx="314.64" cy="400.40" r="0.85" fill="#1b3560"/><circle cx="316.96" cy="403.09" r="0.85" fill="#1b3560"/><circle cx="319.28" cy="401.80" r="0.85" fill="#1b3560"/><circle cx="321.60" cy="403.03" r="0.85" fill="#1b3560"/><circle cx="323.92" cy="403.05" r="0.85" fill="#1b3560"/><circle cx="326.24" cy="401.35" r="0.85" fill="#1b3560"/><circle cx="328.56" cy="402.82" r="0.85" fill="#1b3560"/><circle cx="330.88" cy="402.92" r="0.85" fill="#1b3560"/><circle cx="333.20" cy="401.39" r="0.85" fill="#1b3560"/><circle cx="335.52" cy="402.95" r="0.85" fill="#1b3560"/><circle cx="337.84" cy="402.93" r="0.85" fill="#1b3560"/><circle cx="340.16" cy="401.76" r="0.85" fill="#1b3560"/><circle cx="342.48" cy="402.84" r="0.85" fill="#1b3560"/><circle cx="344.80" cy="400.40" r="0.85" fill="#1b3560"/><circle cx="347.12" cy="401.18" r="0.85" fill="#1b3560"/><circle cx="349.44" cy="402.85" r="0.85" fill="#1b3560"/><circle cx="351.76" cy="402.88" r="0.85" fill="#1b3560"/><circle cx="354.08" cy="401.49" r="0.85" fill="#1b3560"/><circle cx="356.40" cy="403.04" r="0.85" fill="#1b3560"/><circle cx="358.72" cy="403.16" r="0.85" fill="#1b3560"/><circle cx="361.04" cy="401.29" r="0.85" fill="#1b3560"/><circle cx="363.36" cy="403.18" r="0.85" fill="#1b3560"/><circle cx="365.68" cy="403.17" r="0.85" fill="#1b3560"/><circle cx="368.00" cy="401.63" r="0.85" fill="#1b3560"/><circle cx="370.32" cy="403.14" r="0.85" fill="#1b3560"/><circle cx="372.64" cy="403.06" r="0.85" fill="#1b3560"/><circle cx="374.96" cy="401.76" r="0.85" fill="#1b3560"/><circle cx="377.28" cy="403.20" r="0.85" fill="#1b3560"/><circle cx="379.60" cy="403.14" r="0.85" fill="#1b3560"/><circle cx="381.92" cy="401.72" r="0.85" fill="#1b3560"/><circle cx="384.24" cy="403.05" r="0.85" fill="#1b3560"/><circle cx="386.56" cy="403.19" r="0.85" fill="#1b3560"/><circle cx="387.60" cy="402.60" r="0.85" fill="#1b3560"/><circle cx="390.00" cy="393.50" r="0.85" fill="#1b3560"/><circle cx="392.50" cy="355.00" r="0.85" fill="#1b3560"/><circle cx="394.70" cy="356.70" r="0.85" fill="#1b3560"/><circle cx="397.30" cy="355.00" r="0.85" fill="#1b3560"/><circle cx="399.80" cy="357.90" r="0.85" fill="#1b3560"/><circle cx="401.70" cy="366.70" r="0.85" fill="#1b3560"/><circle cx="404.20" cy="402.30" r="0.85" fill="#1b3560"/><circle cx="405.12" cy="402.85" r="0.85" fill="#1b3560"/><circle cx="407.44" cy="402.95" r="0.85" fill="#1b3560"/><circle cx="409.76" cy="401.68" r="0.85" fill="#1b3560"/><circle cx="412.08" cy="403.10" r="0.85" fill="#1b3560"/><circle cx="414.40" cy="403.06" r="0.85" fill="#1b3560"/><circle cx="416.72" cy="401.51" r="0.85" fill="#1b3560"/><circle cx="419.04" cy="403.15" r="0.85" fill="#1b3560"/><circle cx="421.36" cy="402.86" r="0.85" fill="#1b3560"/><circle cx="423.68" cy="401.01" r="0.85" fill="#1b3560"/><circle cx="426.00" cy="403.01" r="0.85" fill="#1b3560"/><circle cx="428.32" cy="403.01" r="0.85" fill="#1b3560"/><circle cx="430.64" cy="401.73" r="0.85" fill="#1b3560"/><circle cx="432.96" cy="403.16" r="0.85" fill="#1b3560"/><circle cx="435.28" cy="403.06" r="0.85" fill="#1b3560"/><circle cx="437.60" cy="401.59" r="0.85" fill="#1b3560"/><circle cx="439.92" cy="402.87" r="0.85" fill="#1b3560"/><circle cx="442.24" cy="403.14" r="0.85" fill="#1b3560"/><circle cx="444.56" cy="401.78" r="0.85" fill="#1b3560"/><circle cx="446.88" cy="402.91" r="0.85" fill="#1b3560"/><circle cx="449.20" cy="403.04" r="0.85" fill="#1b3560"/><circle cx="451.52" cy="402.30" r="0.85" fill="#1b3560"/><circle cx="453.84" cy="403.04" r="0.85" fill="#1b3560"/><circle cx="456.16" cy="403.19" r="0.85" fill="#1b3560"/><circle cx="458.48" cy="402.91" r="0.85" fill="#1b3560"/><circle cx="460.80" cy="402.94" r="0.85" fill="#1b3560"/><circle cx="463.12" cy="402.99" r="0.85" fill="#1b3560"/><circle cx="465.44" cy="402.30" r="0.85" fill="#1b3560"/><circle cx="467.76" cy="403.09" r="0.85" fill="#1b3560"/><circle cx="469.00" cy="403.00" r="0.85" fill="#1b3560"/><circle cx="471.00" cy="390.40" r="0.85" fill="#1b3560"/><circle cx="473.30" cy="322.10" r="0.85" fill="#1b3560"/><circle cx="475.90" cy="318.90" r="0.85" fill="#1b3560"/><circle cx="478.20" cy="320.50" r="0.85" fill="#1b3560"/><circle cx="481.00" cy="324.50" r="0.85" fill="#1b3560"/><circle cx="482.80" cy="338.00" r="0.85" fill="#1b3560"/><circle cx="485.60" cy="401.00" r="0.85" fill="#1b3560"/><circle cx="486.32" cy="402.30" r="0.85" fill="#1b3560"/><circle cx="488.64" cy="402.97" r="0.85" fill="#1b3560"/><circle cx="490.96" cy="403.04" r="0.85" fill="#1b3560"/><circle cx="493.28" cy="403.10" r="0.85" fill="#1b3560"/><circle cx="495.60" cy="403.13" r="0.85" fill="#1b3560"/><circle cx="497.92" cy="402.00" r="0.85" fill="#1b3560"/><circle cx="500.24" cy="402.00" r="0.85" fill="#1b3560"/><circle cx="502.56" cy="402.00" r="0.85" fill="#1b3560"/><circle cx="504.88" cy="402.00" r="0.85" fill="#1b3560"/><circle cx="507.20" cy="402.90" r="0.85" fill="#1b3560"/><circle cx="509.52" cy="402.94" r="0.85" fill="#1b3560"/><circle cx="511.84" cy="402.96" r="0.85" fill="#1b3560"/><circle cx="514.16" cy="402.98" r="0.85" fill="#1b3560"/><circle cx="516.48" cy="403.13" r="0.85" fill="#1b3560"/><circle cx="518.80" cy="403.04" r="0.85" fill="#1b3560"/><circle cx="521.12" cy="402.30" r="0.85" fill="#1b3560"/><circle cx="523.44" cy="403.19" r="0.85" fill="#1b3560"/><circle cx="525.76" cy="403.19" r="0.85" fill="#1b3560"/><circle cx="528.08" cy="402.30" r="0.85" fill="#1b3560"/><circle cx="530.40" cy="403.12" r="0.85" fill="#1b3560"/><circle cx="532.72" cy="402.99" r="0.85" fill="#1b3560"/><circle cx="535.04" cy="403.07" r="0.85" fill="#1b3560"/><circle cx="536.20" cy="403.10" r="0.85" fill="#1b3560"/><circle cx="538.40" cy="355.20" r="0.85" fill="#1b3560"/><circle cx="540.30" cy="350.00" r="0.85" fill="#1b3560"/><circle cx="542.10" cy="347.60" r="0.85" fill="#1b3560"/><circle cx="544.60" cy="345.00" r="0.85" fill="#1b3560"/><circle cx="546.80" cy="354.30" r="0.85" fill="#1b3560"/><circle cx="550.10" cy="401.80" r="0.85" fill="#1b3560"/><circle cx="551.28" cy="402.92" r="0.85" fill="#1b3560"/><circle cx="553.60" cy="402.90" r="0.85" fill="#1b3560"/><circle cx="555.92" cy="403.09" r="0.85" fill="#1b3560"/><circle cx="558.24" cy="403.13" r="0.85" fill="#1b3560"/><circle cx="560.56" cy="403.13" r="0.85" fill="#1b3560"/><circle cx="562.88" cy="402.30" r="0.85" fill="#1b3560"/><circle cx="565.20" cy="403.14" r="0.85" fill="#1b3560"/><circle cx="567.52" cy="403.01" r="0.85" fill="#1b3560"/><circle cx="569.84" cy="402.95" r="0.85" fill="#1b3560"/><circle cx="572.16" cy="403.06" r="0.85" fill="#1b3560"/><circle cx="574.48" cy="403.00" r="0.85" fill="#1b3560"/><circle cx="576.80" cy="403.17" r="0.85" fill="#1b3560"/><circle cx="579.12" cy="403.00" r="0.85" fill="#1b3560"/><circle cx="581.44" cy="402.93" r="0.85" fill="#1b3560"/><circle cx="583.76" cy="402.97" r="0.85" fill="#1b3560"/><circle cx="586.08" cy="403.06" r="0.85" fill="#1b3560"/><circle cx="588.40" cy="403.15" r="0.85" fill="#1b3560"/><circle cx="590.72" cy="403.10" r="0.85" fill="#1b3560"/><circle cx="593.04" cy="402.96" r="0.85" fill="#1b3560"/><circle cx="595.36" cy="402.91" r="0.85" fill="#1b3560"/><circle cx="597.68" cy="402.30" r="0.85" fill="#1b3560"/><circle cx="600.00" cy="403.08" r="0.85" fill="#1b3560"/><circle cx="602.32" cy="402.92" r="0.85" fill="#1b3560"/><circle cx="604.64" cy="403.15" r="0.85" fill="#1b3560"/><circle cx="606.96" cy="403.16" r="0.85" fill="#1b3560"/><circle cx="609.28" cy="403.15" r="0.85" fill="#1b3560"/><circle cx="610.60" cy="403.10" r="0.85" fill="#1b3560"/><circle cx="613.10" cy="371.40" r="0.85" fill="#1b3560"/><circle cx="615.30" cy="348.30" r="0.85" fill="#1b3560"/><circle cx="617.70" cy="344.00" r="0.85" fill="#1b3560"/><circle cx="620.10" cy="350.90" r="0.85" fill="#1b3560"/><circle cx="622.40" cy="351.50" r="0.85" fill="#1b3560"/><circle cx="624.80" cy="380.40" r="0.85" fill="#1b3560"/><circle cx="627.10" cy="400.00" r="0.85" fill="#1b3560"/><circle cx="628.90" cy="403.10" r="0.85" fill="#1b3560"/><circle cx="630.16" cy="402.93" r="0.85" fill="#1b3560"/><circle cx="632.48" cy="403.16" r="0.85" fill="#1b3560"/><circle cx="634.80" cy="402.95" r="0.85" fill="#1b3560"/><circle cx="637.12" cy="402.91" r="0.85" fill="#1b3560"/><circle cx="639.44" cy="403.09" r="0.85" fill="#1b3560"/><circle cx="641.76" cy="403.04" r="0.85" fill="#1b3560"/><polyline points="54.80,403.20 57.12,403.20 59.44,403.20 61.76,403.20 64.08,403.20 66.40,403.20 68.72,403.20 71.04,403.20 73.36,403.20 75.68,403.20 78.00,403.20 80.32,403.20 82.64,403.20 84.96,403.20 87.28,403.20 89.60,403.20 91.92,403.20 94.24,403.20 96.56,403.20 98.88,403.20 101.20,403.20 103.52,403.20 105.84,403.20 108.16,403.20 110.48,403.20 112.80,403.20 115.12,403.20 117.44,403.20 119.76,403.20 122.08,403.20 124.40,403.20 126.72,403.20 129.04,403.20 131.36,403.20 133.68,403.20 136.00,403.20 138.32,403.20 140.64,403.20 142.96,403.20 145.28,403.20 147.60,403.20 149.92,403.20 152.24,403.20 154.56,403.20 156.88,403.20 159.20,403.20 161.52,403.20 163.84,403.20 166.16,403.20 168.48,403.20 170.80,403.20 173.12,403.20 175.44,403.20 177.76,403.20 180.08,403.20 182.40,403.20 184.72,403.20 187.04,403.20 189.36,403.20 191.68,403.20 194.00,403.20 196.32,403.20 198.64,403.20 200.96,403.20 203.28,403.20 205.60,403.20 207.92,403.20 210.24,403.20 212.56,403.20 214.88,403.20 217.20,403.20 219.52,403.20 221.84,403.20 224.16,403.20 226.48,403.20 228.80,403.20 231.12,403.20 233.44,403.20 235.76,403.20 238.08,403.20 240.40,403.20 242.72,403.20 245.04,403.20 247.36,403.20 249.68,403.20 252.00,403.20 254.32,403.20 256.64,403.20 258.96,403.20 261.28,403.20 263.60,403.20 265.92,403.20 268.24,403.20 270.56,403.20 272.88,403.20 275.20,403.20 277.52,403.20 279.84,403.20 282.16,403.20 284.48,403.20 286.80,403.20 289.12,403.20 291.44,403.20 293.76,403.20 296.08,403.20 298.40,403.20 300.72,403.20 303.04,403.20 305.36,403.20 307.68,403.20 310.00,403.20 312.32,403.20 314.64,403.20 316.96,403.20 319.28,403.20 321.60,403.20 323.92,403.20 326.24,403.20 328.56,403.20 330.88,403.20 333.20,403.20 335.52,403.20 337.84,403.20 340.16,403.20 342.48,403.20 344.80,403.20 347.12,403.20 349.44,403.20 351.76,403.20 354.08,403.20 356.40,403.20 358.72,403.20 361.04,403.20 363.36,403.20 365.68,403.20 368.00,403.20 370.32,403.20 372.64,403.20 374.96,403.20 377.28,403.20 379.60,403.20 381.92,403.20 384.24,403.20 386.56,403.20 388.88,403.20 391.20,403.20 393.52,403.20 395.84,403.20 398.16,403.20 400.48,403.20 401.70,402.30 403.80,389.80 406.10,393.50 408.60,390.20 411.10,390.50 413.50,393.50 415.20,402.30 416.72,403.20 419.04,403.20 421.36,403.20 423.68,403.20 426.00,403.20 428.32,403.20 430.64,403.20 432.96,403.20 435.28,403.20 437.60,403.20 439.92,403.20 442.24,403.20 444.56,403.20 446.88,403.20 449.20,403.20 451.52,403.20 453.84,403.20 456.16,403.20 458.48,403.20 460.80,403.20 463.12,403.20 465.44,403.20 467.76,403.20 470.08,403.20 472.40,403.20 474.72,403.20 477.04,403.20 479.36,403.20 481.68,403.20 483.30,399.70 485.20,392.70 487.50,390.40 489.80,389.30 492.60,388.80 495.00,388.60 497.30,402.80 497.92,403.20 500.24,403.20 502.56,403.20 504.88,403.20 507.20,403.20 509.52,403.20 511.84,403.20 514.16,403.20 516.48,403.20 518.80,403.20 521.12,403.20 523.44,403.20 525.76,403.20 528.08,403.20 530.40,403.20 532.72,403.20 535.04,403.20 537.36,403.20 539.68,403.20 542.00,403.20 544.32,403.20 546.64,403.20 547.40,402.80 549.00,394.40 550.90,390.60 553.30,390.00 556.10,391.20 558.40,389.70 560.40,398.70 562.60,403.10 565.20,403.20 567.52,403.20 569.84,403.20 572.16,403.20 574.48,403.20 576.80,403.20 579.12,403.20 581.44,403.20 583.76,403.20 586.08,403.20 588.40,403.20 590.72,403.20 593.04,403.20 595.36,403.20 597.68,403.20 600.00,403.20 602.32,403.20 604.64,403.20 606.96,403.20 609.28,403.20 611.60,403.20 613.92,403.20 616.24,403.20 618.56,403.20 620.88,403.20 622.80,402.80 625.20,396.20 627.10,390.60 629.30,392.00 631.30,389.70 633.60,389.30 636.40,397.20 639.20,402.80 641.76,403.20" fill="none" stroke="#f39a2b" stroke-width="1.1" stroke-linejoin="round"/><circle cx="54.80" cy="403.20" r="0.8" fill="#6b3a16"/><circle cx="57.12" cy="403.20" r="0.8" fill="#6b3a16"/><circle cx="59.44" cy="403.20" r="0.8" fill="#6b3a16"/><circle cx="61.76" cy="403.20" r="0.8" fill="#6b3a16"/><circle cx="64.08" cy="403.20" r="0.8" fill="#6b3a16"/><circle cx="66.40" cy="403.20" r="0.8" fill="#6b3a16"/><circle cx="68.72" cy="403.20" r="0.8" fill="#6b3a16"/><circle cx="71.04" cy="403.20" r="0.8" fill="#6b3a16"/><circle cx="73.36" cy="403.20" r="0.8" fill="#6b3a16"/><circle cx="75.68" cy="403.20" r="0.8" fill="#6b3a16"/><circle cx="78.00" cy="403.20" r="0.8" fill="#6b3a16"/><circle cx="80.32" cy="403.20" r="0.8" fill="#6b3a16"/><circle cx="82.64" cy="403.20" r="0.8" fill="#6b3a16"/><circle cx="84.96" cy="403.20" r="0.8" fill="#6b3a16"/><circle cx="87.28" cy="403.20" r="0.8" fill="#6b3a16"/><circle cx="89.60" cy="403.20" r="0.8" fill="#6b3a16"/><circle cx="91.92" cy="403.20" r="0.8" fill="#6b3a16"/><circle cx="94.24" cy="403.20" r="0.8" fill="#6b3a16"/><circle cx="96.56" cy="403.20" r="0.8" fill="#6b3a16"/><circle cx="98.88" cy="403.20" r="0.8" fill="#6b3a16"/><circle cx="101.20" cy="403.20" r="0.8" fill="#6b3a16"/><circle cx="103.52" cy="403.20" r="0.8" fill="#6b3a16"/><circle cx="105.84" cy="403.20" r="0.8" fill="#6b3a16"/><circle cx="108.16" cy="403.20" r="0.8" fill="#6b3a16"/><circle cx="110.48" cy="403.20" r="0.8" fill="#6b3a16"/><circle cx="112.80" cy="403.20" r="0.8" fill="#6b3a16"/><circle cx="115.12" cy="403.20" r="0.8" fill="#6b3a16"/><circle cx="117.44" cy="403.20" r="0.8" fill="#6b3a16"/><circle cx="119.76" cy="403.20" r="0.8" fill="#6b3a16"/><circle cx="122.08" cy="403.20" r="0.8" fill="#6b3a16"/><circle cx="124.40" cy="403.20" r="0.8" fill="#6b3a16"/><circle cx="126.72" cy="403.20" r="0.8" fill="#6b3a16"/><circle cx="129.04" cy="403.20" r="0.8" fill="#6b3a16"/><circle cx="131.36" cy="403.20" r="0.8" fill="#6b3a16"/><circle cx="133.68" cy="403.20" r="0.8" fill="#6b3a16"/><circle cx="136.00" cy="403.20" r="0.8" fill="#6b3a16"/><circle cx="138.32" cy="403.20" r="0.8" fill="#6b3a16"/><circle cx="140.64" cy="403.20" r="0.8" fill="#6b3a16"/><circle cx="142.96" cy="403.20" r="0.8" fill="#6b3a16"/><circle cx="145.28" cy="403.20" r="0.8" fill="#6b3a16"/><circle cx="147.60" cy="403.20" r="0.8" fill="#6b3a16"/><circle cx="149.92" cy="403.20" r="0.8" fill="#6b3a16"/><circle cx="152.24" cy="403.20" r="0.8" fill="#6b3a16"/><circle cx="154.56" cy="403.20" r="0.8" fill="#6b3a16"/><circle cx="156.88" cy="403.20" r="0.8" fill="#6b3a16"/><circle cx="159.20" cy="403.20" r="0.8" fill="#6b3a16"/><circle cx="161.52" cy="403.20" r="0.8" fill="#6b3a16"/><circle cx="163.84" cy="403.20" r="0.8" fill="#6b3a16"/><circle cx="166.16" cy="403.20" r="0.8" fill="#6b3a16"/><circle cx="168.48" cy="403.20" r="0.8" fill="#6b3a16"/><circle cx="170.80" cy="403.20" r="0.8" fill="#6b3a16"/><circle cx="173.12" cy="403.20" r="0.8" fill="#6b3a16"/><circle cx="175.44" cy="403.20" r="0.8" fill="#6b3a16"/><circle cx="177.76" cy="403.20" r="0.8" fill="#6b3a16"/><circle cx="180.08" cy="403.20" r="0.8" fill="#6b3a16"/><circle cx="182.40" cy="403.20" r="0.8" fill="#6b3a16"/><circle cx="184.72" cy="403.20" r="0.8" fill="#6b3a16"/><circle cx="187.04" cy="403.20" r="0.8" fill="#6b3a16"/><circle cx="189.36" cy="403.20" r="0.8" fill="#6b3a16"/><circle cx="191.68" cy="403.20" r="0.8" fill="#6b3a16"/><circle cx="194.00" cy="403.20" r="0.8" fill="#6b3a16"/><circle cx="196.32" cy="403.20" r="0.8" fill="#6b3a16"/><circle cx="198.64" cy="403.20" r="0.8" fill="#6b3a16"/><circle cx="200.96" cy="403.20" r="0.8" fill="#6b3a16"/><circle cx="203.28" cy="403.20" r="0.8" fill="#6b3a16"/><circle cx="205.60" cy="403.20" r="0.8" fill="#6b3a16"/><circle cx="207.92" cy="403.20" r="0.8" fill="#6b3a16"/><circle cx="210.24" cy="403.20" r="0.8" fill="#6b3a16"/><circle cx="212.56" cy="403.20" r="0.8" fill="#6b3a16"/><circle cx="214.88" cy="403.20" r="0.8" fill="#6b3a16"/><circle cx="217.20" cy="403.20" r="0.8" fill="#6b3a16"/><circle cx="219.52" cy="403.20" r="0.8" fill="#6b3a16"/><circle cx="221.84" cy="403.20" r="0.8" fill="#6b3a16"/><circle cx="224.16" cy="403.20" r="0.8" fill="#6b3a16"/><circle cx="226.48" cy="403.20" r="0.8" fill="#6b3a16"/><circle cx="228.80" cy="403.20" r="0.8" fill="#6b3a16"/><circle cx="231.12" cy="403.20" r="0.8" fill="#6b3a16"/><circle cx="233.44" cy="403.20" r="0.8" fill="#6b3a16"/><circle cx="235.76" cy="403.20" r="0.8" fill="#6b3a16"/><circle cx="238.08" cy="403.20" r="0.8" fill="#6b3a16"/><circle cx="240.40" cy="403.20" r="0.8" fill="#6b3a16"/><circle cx="242.72" cy="403.20" r="0.8" fill="#6b3a16"/><circle cx="245.04" cy="403.20" r="0.8" fill="#6b3a16"/><circle cx="247.36" cy="403.20" r="0.8" fill="#6b3a16"/><circle cx="249.68" cy="403.20" r="0.8" fill="#6b3a16"/><circle cx="252.00" cy="403.20" r="0.8" fill="#6b3a16"/><circle cx="254.32" cy="403.20" r="0.8" fill="#6b3a16"/><circle cx="256.64" cy="403.20" r="0.8" fill="#6b3a16"/><circle cx="258.96" cy="403.20" r="0.8" fill="#6b3a16"/><circle cx="261.28" cy="403.20" r="0.8" fill="#6b3a16"/><circle cx="263.60" cy="403.20" r="0.8" fill="#6b3a16"/><circle cx="265.92" cy="403.20" r="0.8" fill="#6b3a16"/><circle cx="268.24" cy="403.20" r="0.8" fill="#6b3a16"/><circle cx="270.56" cy="403.20" r="0.8" fill="#6b3a16"/><circle cx="272.88" cy="403.20" r="0.8" fill="#6b3a16"/><circle cx="275.20" cy="403.20" r="0.8" fill="#6b3a16"/><circle cx="277.52" cy="403.20" r="0.8" fill="#6b3a16"/><circle cx="279.84" cy="403.20" r="0.8" fill="#6b3a16"/><circle cx="282.16" cy="403.20" r="0.8" fill="#6b3a16"/><circle cx="284.48" cy="403.20" r="0.8" fill="#6b3a16"/><circle cx="286.80" cy="403.20" r="0.8" fill="#6b3a16"/><circle cx="289.12" cy="403.20" r="0.8" fill="#6b3a16"/><circle cx="291.44" cy="403.20" r="0.8" fill="#6b3a16"/><circle cx="293.76" cy="403.20" r="0.8" fill="#6b3a16"/><circle cx="296.08" cy="403.20" r="0.8" fill="#6b3a16"/><circle cx="298.40" cy="403.20" r="0.8" fill="#6b3a16"/><circle cx="300.72" cy="403.20" r="0.8" fill="#6b3a16"/><circle cx="303.04" cy="403.20" r="0.8" fill="#6b3a16"/><circle cx="305.36" cy="403.20" r="0.8" fill="#6b3a16"/><circle cx="307.68" cy="403.20" r="0.8" fill="#6b3a16"/><circle cx="310.00" cy="403.20" r="0.8" fill="#6b3a16"/><circle cx="312.32" cy="403.20" r="0.8" fill="#6b3a16"/><circle cx="314.64" cy="403.20" r="0.8" fill="#6b3a16"/><circle cx="316.96" cy="403.20" r="0.8" fill="#6b3a16"/><circle cx="319.28" cy="403.20" r="0.8" fill="#6b3a16"/><circle cx="321.60" cy="403.20" r="0.8" fill="#6b3a16"/><circle cx="323.92" cy="403.20" r="0.8" fill="#6b3a16"/><circle cx="326.24" cy="403.20" r="0.8" fill="#6b3a16"/><circle cx="328.56" cy="403.20" r="0.8" fill="#6b3a16"/><circle cx="330.88" cy="403.20" r="0.8" fill="#6b3a16"/><circle cx="333.20" cy="403.20" r="0.8" fill="#6b3a16"/><circle cx="335.52" cy="403.20" r="0.8" fill="#6b3a16"/><circle cx="337.84" cy="403.20" r="0.8" fill="#6b3a16"/><circle cx="340.16" cy="403.20" r="0.8" fill="#6b3a16"/><circle cx="342.48" cy="403.20" r="0.8" fill="#6b3a16"/><circle cx="344.80" cy="403.20" r="0.8" fill="#6b3a16"/><circle cx="347.12" cy="403.20" r="0.8" fill="#6b3a16"/><circle cx="349.44" cy="403.20" r="0.8" fill="#6b3a16"/><circle cx="351.76" cy="403.20" r="0.8" fill="#6b3a16"/><circle cx="354.08" cy="403.20" r="0.8" fill="#6b3a16"/><circle cx="356.40" cy="403.20" r="0.8" fill="#6b3a16"/><circle cx="358.72" cy="403.20" r="0.8" fill="#6b3a16"/><circle cx="361.04" cy="403.20" r="0.8" fill="#6b3a16"/><circle cx="363.36" cy="403.20" r="0.8" fill="#6b3a16"/><circle cx="365.68" cy="403.20" r="0.8" fill="#6b3a16"/><circle cx="368.00" cy="403.20" r="0.8" fill="#6b3a16"/><circle cx="370.32" cy="403.20" r="0.8" fill="#6b3a16"/><circle cx="372.64" cy="403.20" r="0.8" fill="#6b3a16"/><circle cx="374.96" cy="403.20" r="0.8" fill="#6b3a16"/><circle cx="377.28" cy="403.20" r="0.8" fill="#6b3a16"/><circle cx="379.60" cy="403.20" r="0.8" fill="#6b3a16"/><circle cx="381.92" cy="403.20" r="0.8" fill="#6b3a16"/><circle cx="384.24" cy="403.20" r="0.8" fill="#6b3a16"/><circle cx="386.56" cy="403.20" r="0.8" fill="#6b3a16"/><circle cx="388.88" cy="403.20" r="0.8" fill="#6b3a16"/><circle cx="391.20" cy="403.20" r="0.8" fill="#6b3a16"/><circle cx="393.52" cy="403.20" r="0.8" fill="#6b3a16"/><circle cx="395.84" cy="403.20" r="0.8" fill="#6b3a16"/><circle cx="398.16" cy="403.20" r="0.8" fill="#6b3a16"/><circle cx="400.48" cy="403.20" r="0.8" fill="#6b3a16"/><circle cx="401.70" cy="402.30" r="0.8" fill="#6b3a16"/><circle cx="403.80" cy="389.80" r="0.8" fill="#6b3a16"/><circle cx="406.10" cy="393.50" r="0.8" fill="#6b3a16"/><circle cx="408.60" cy="390.20" r="0.8" fill="#6b3a16"/><circle cx="411.10" cy="390.50" r="0.8" fill="#6b3a16"/><circle cx="413.50" cy="393.50" r="0.8" fill="#6b3a16"/><circle cx="415.20" cy="402.30" r="0.8" fill="#6b3a16"/><circle cx="416.72" cy="403.20" r="0.8" fill="#6b3a16"/><circle cx="419.04" cy="403.20" r="0.8" fill="#6b3a16"/><circle cx="421.36" cy="403.20" r="0.8" fill="#6b3a16"/><circle cx="423.68" cy="403.20" r="0.8" fill="#6b3a16"/><circle cx="426.00" cy="403.20" r="0.8" fill="#6b3a16"/><circle cx="428.32" cy="403.20" r="0.8" fill="#6b3a16"/><circle cx="430.64" cy="403.20" r="0.8" fill="#6b3a16"/><circle cx="432.96" cy="403.20" r="0.8" fill="#6b3a16"/><circle cx="435.28" cy="403.20" r="0.8" fill="#6b3a16"/><circle cx="437.60" cy="403.20" r="0.8" fill="#6b3a16"/><circle cx="439.92" cy="403.20" r="0.8" fill="#6b3a16"/><circle cx="442.24" cy="403.20" r="0.8" fill="#6b3a16"/><circle cx="444.56" cy="403.20" r="0.8" fill="#6b3a16"/><circle cx="446.88" cy="403.20" r="0.8" fill="#6b3a16"/><circle cx="449.20" cy="403.20" r="0.8" fill="#6b3a16"/><circle cx="451.52" cy="403.20" r="0.8" fill="#6b3a16"/><circle cx="453.84" cy="403.20" r="0.8" fill="#6b3a16"/><circle cx="456.16" cy="403.20" r="0.8" fill="#6b3a16"/><circle cx="458.48" cy="403.20" r="0.8" fill="#6b3a16"/><circle cx="460.80" cy="403.20" r="0.8" fill="#6b3a16"/><circle cx="463.12" cy="403.20" r="0.8" fill="#6b3a16"/><circle cx="465.44" cy="403.20" r="0.8" fill="#6b3a16"/><circle cx="467.76" cy="403.20" r="0.8" fill="#6b3a16"/><circle cx="470.08" cy="403.20" r="0.8" fill="#6b3a16"/><circle cx="472.40" cy="403.20" r="0.8" fill="#6b3a16"/><circle cx="474.72" cy="403.20" r="0.8" fill="#6b3a16"/><circle cx="477.04" cy="403.20" r="0.8" fill="#6b3a16"/><circle cx="479.36" cy="403.20" r="0.8" fill="#6b3a16"/><circle cx="481.68" cy="403.20" r="0.8" fill="#6b3a16"/><circle cx="483.30" cy="399.70" r="0.8" fill="#6b3a16"/><circle cx="485.20" cy="392.70" r="0.8" fill="#6b3a16"/><circle cx="487.50" cy="390.40" r="0.8" fill="#6b3a16"/><circle cx="489.80" cy="389.30" r="0.8" fill="#6b3a16"/><circle cx="492.60" cy="388.80" r="0.8" fill="#6b3a16"/><circle cx="495.00" cy="388.60" r="0.8" fill="#6b3a16"/><circle cx="497.30" cy="402.80" r="0.8" fill="#6b3a16"/><circle cx="497.92" cy="403.20" r="0.8" fill="#6b3a16"/><circle cx="500.24" cy="403.20" r="0.8" fill="#6b3a16"/><circle cx="502.56" cy="403.20" r="0.8" fill="#6b3a16"/><circle cx="504.88" cy="403.20" r="0.8" fill="#6b3a16"/><circle cx="507.20" cy="403.20" r="0.8" fill="#6b3a16"/><circle cx="509.52" cy="403.20" r="0.8" fill="#6b3a16"/><circle cx="511.84" cy="403.20" r="0.8" fill="#6b3a16"/><circle cx="514.16" cy="403.20" r="0.8" fill="#6b3a16"/><circle cx="516.48" cy="403.20" r="0.8" fill="#6b3a16"/><circle cx="518.80" cy="403.20" r="0.8" fill="#6b3a16"/><circle cx="521.12" cy="403.20" r="0.8" fill="#6b3a16"/><circle cx="523.44" cy="403.20" r="0.8" fill="#6b3a16"/><circle cx="525.76" cy="403.20" r="0.8" fill="#6b3a16"/><circle cx="528.08" cy="403.20" r="0.8" fill="#6b3a16"/><circle cx="530.40" cy="403.20" r="0.8" fill="#6b3a16"/><circle cx="532.72" cy="403.20" r="0.8" fill="#6b3a16"/><circle cx="535.04" cy="403.20" r="0.8" fill="#6b3a16"/><circle cx="537.36" cy="403.20" r="0.8" fill="#6b3a16"/><circle cx="539.68" cy="403.20" r="0.8" fill="#6b3a16"/><circle cx="542.00" cy="403.20" r="0.8" fill="#6b3a16"/><circle cx="544.32" cy="403.20" r="0.8" fill="#6b3a16"/><circle cx="546.64" cy="403.20" r="0.8" fill="#6b3a16"/><circle cx="547.40" cy="402.80" r="0.8" fill="#6b3a16"/><circle cx="549.00" cy="394.40" r="0.8" fill="#6b3a16"/><circle cx="550.90" cy="390.60" r="0.8" fill="#6b3a16"/><circle cx="553.30" cy="390.00" r="0.8" fill="#6b3a16"/><circle cx="556.10" cy="391.20" r="0.8" fill="#6b3a16"/><circle cx="558.40" cy="389.70" r="0.8" fill="#6b3a16"/><circle cx="560.40" cy="398.70" r="0.8" fill="#6b3a16"/><circle cx="562.60" cy="403.10" r="0.8" fill="#6b3a16"/><circle cx="565.20" cy="403.20" r="0.8" fill="#6b3a16"/><circle cx="567.52" cy="403.20" r="0.8" fill="#6b3a16"/><circle cx="569.84" cy="403.20" r="0.8" fill="#6b3a16"/><circle cx="572.16" cy="403.20" r="0.8" fill="#6b3a16"/><circle cx="574.48" cy="403.20" r="0.8" fill="#6b3a16"/><circle cx="576.80" cy="403.20" r="0.8" fill="#6b3a16"/><circle cx="579.12" cy="403.20" r="0.8" fill="#6b3a16"/><circle cx="581.44" cy="403.20" r="0.8" fill="#6b3a16"/><circle cx="583.76" cy="403.20" r="0.8" fill="#6b3a16"/><circle cx="586.08" cy="403.20" r="0.8" fill="#6b3a16"/><circle cx="588.40" cy="403.20" r="0.8" fill="#6b3a16"/><circle cx="590.72" cy="403.20" r="0.8" fill="#6b3a16"/><circle cx="593.04" cy="403.20" r="0.8" fill="#6b3a16"/><circle cx="595.36" cy="403.20" r="0.8" fill="#6b3a16"/><circle cx="597.68" cy="403.20" r="0.8" fill="#6b3a16"/><circle cx="600.00" cy="403.20" r="0.8" fill="#6b3a16"/><circle cx="602.32" cy="403.20" r="0.8" fill="#6b3a16"/><circle cx="604.64" cy="403.20" r="0.8" fill="#6b3a16"/><circle cx="606.96" cy="403.20" r="0.8" fill="#6b3a16"/><circle cx="609.28" cy="403.20" r="0.8" fill="#6b3a16"/><circle cx="611.60" cy="403.20" r="0.8" fill="#6b3a16"/><circle cx="613.92" cy="403.20" r="0.8" fill="#6b3a16"/><circle cx="616.24" cy="403.20" r="0.8" fill="#6b3a16"/><circle cx="618.56" cy="403.20" r="0.8" fill="#6b3a16"/><circle cx="620.88" cy="403.20" r="0.8" fill="#6b3a16"/><circle cx="622.80" cy="402.80" r="0.8" fill="#6b3a16"/><circle cx="625.20" cy="396.20" r="0.8" fill="#6b3a16"/><circle cx="627.10" cy="390.60" r="0.8" fill="#6b3a16"/><circle cx="629.30" cy="392.00" r="0.8" fill="#6b3a16"/><circle cx="631.30" cy="389.70" r="0.8" fill="#6b3a16"/><circle cx="633.60" cy="389.30" r="0.8" fill="#6b3a16"/><circle cx="636.40" cy="397.20" r="0.8" fill="#6b3a16"/><circle cx="639.20" cy="402.80" r="0.8" fill="#6b3a16"/><circle cx="641.76" cy="403.20" r="0.8" fill="#6b3a16"/><polyline points="54.80,403.15 57.12,403.19 59.44,402.81 61.76,402.94 64.08,402.99 66.40,402.83 68.72,403.03 71.04,402.85 73.36,402.87 75.68,403.12 78.00,403.10 80.32,403.08 82.64,403.10 84.96,402.97 87.28,403.10 89.60,403.03 91.92,403.15 94.24,402.84 96.56,403.06 98.88,403.02 101.20,402.97 103.52,402.84 105.84,403.03 108.16,402.83 110.48,403.00 112.80,402.99 115.12,402.99 117.44,403.19 119.76,403.02 122.08,403.13 124.40,403.20 126.72,402.88 129.04,403.13 131.36,403.01 133.68,402.91 136.00,402.98 138.32,403.07 140.64,402.99 142.96,402.98 145.28,402.89 147.60,403.16 149.92,402.98 152.24,403.10 154.56,403.09 156.88,402.89 159.20,403.00 161.52,402.98 163.84,402.90 166.16,402.84 168.48,403.02 170.80,402.95 173.12,403.00 175.44,403.00 177.76,402.92 180.08,403.02 182.40,402.99 184.72,403.01 187.04,402.82 189.36,402.92 191.68,402.85 194.00,402.82 196.32,403.10 198.64,402.98 200.96,402.82 203.28,402.86 205.60,403.15 207.92,403.15 210.24,403.02 212.56,403.17 214.88,403.10 217.20,403.17 219.52,402.93 221.84,402.89 224.16,402.84 226.48,403.14 228.80,402.91 231.12,402.94 233.44,403.14 235.76,402.85 238.08,402.81 240.40,403.11 242.72,402.82 245.04,403.04 247.36,403.01 249.68,402.80 252.00,402.87 254.32,403.14 256.64,403.03 258.96,402.99 261.28,403.06 263.60,403.12 265.92,403.07 268.24,402.91 270.56,403.19 272.88,402.98 275.20,403.02 277.52,403.19 279.84,403.07 282.16,402.95 284.48,403.00 286.80,403.17 289.12,402.81 291.44,402.88 293.76,402.81 296.08,403.16 298.40,403.09 300.72,403.18 303.04,402.89 305.36,403.09 307.68,403.15 310.00,403.03 312.32,402.84 314.64,402.87 316.96,403.10 319.28,403.14 321.60,402.83 323.92,402.97 326.24,402.92 328.56,403.16 330.88,403.18 333.20,402.92 335.52,403.03 337.84,403.17 340.16,402.82 342.48,402.95 344.80,402.88 347.12,403.17 349.44,402.86 351.76,403.17 354.08,402.85 356.40,403.02 358.72,403.06 361.04,402.98 363.36,402.83 365.68,403.09 368.00,403.15 370.32,402.99 372.64,403.10 374.96,403.16 377.28,403.14 379.60,403.18 381.92,403.12 384.24,403.08 386.56,403.08 388.88,402.90 391.20,403.08 393.52,403.00 395.84,403.13 398.16,403.06 400.48,403.19 402.80,403.10 405.12,403.19 407.44,402.91 409.76,402.98 412.08,403.12 414.40,403.01 416.72,402.83 419.04,403.16 421.36,402.87 423.68,403.03 426.00,403.00 428.32,402.87 430.64,403.04 432.96,403.00 435.28,402.92 437.60,402.81 439.92,403.06 442.24,402.87 444.56,402.92 446.88,402.95 449.20,403.04 451.52,403.06 453.84,403.18 456.16,403.15 458.48,403.17 460.80,402.90 463.12,403.10 465.44,403.13 467.76,403.17 469.00,403.00 471.00,390.40 473.50,337.30 475.90,330.50 478.60,338.00 481.00,340.30 482.80,349.20 485.60,401.00 486.32,402.86 488.64,402.85 490.96,402.93 493.28,403.09 495.60,403.10 497.92,403.08 500.24,403.02 502.56,403.14 504.88,403.02 507.20,403.09 509.52,402.82 511.84,402.81 514.16,402.98 516.48,403.10 518.80,402.81 521.12,403.08 523.44,403.06 525.76,403.20 528.08,403.05 530.40,403.01 532.72,403.00 535.04,403.12 536.20,403.10 538.40,355.20 540.30,350.50 542.10,348.10 544.60,345.50 546.80,354.30 550.10,401.80 551.28,403.00 553.60,403.20 555.92,403.09 558.24,403.16 560.56,403.04 562.88,403.18 565.20,403.19 567.52,403.08 569.84,403.11 572.16,402.97 574.48,402.99 576.80,402.90 579.12,402.94 581.44,402.91 583.76,402.85 586.08,403.04 588.40,403.07 590.72,402.81 593.04,403.14 595.36,402.91 597.68,402.94 600.00,403.18 602.32,402.87 604.64,402.84 606.96,402.95 609.28,402.91 610.60,403.10 613.10,371.40 615.30,348.30 617.70,344.00 620.10,350.90 622.40,351.50 624.80,380.40 627.10,400.00 628.90,403.10 630.16,402.88 632.48,403.14 634.80,402.99 637.12,403.00 639.44,402.87 641.76,402.88" fill="none" stroke="#2f9a3c" stroke-width="1.1" stroke-linejoin="round"/><circle cx="54.80" cy="403.15" r="0.8" fill="#1d3d22"/><circle cx="57.12" cy="403.19" r="0.8" fill="#1d3d22"/><circle cx="59.44" cy="402.81" r="0.8" fill="#1d3d22"/><circle cx="61.76" cy="402.94" r="0.8" fill="#1d3d22"/><circle cx="64.08" cy="402.99" r="0.8" fill="#1d3d22"/><circle cx="66.40" cy="402.83" r="0.8" fill="#1d3d22"/><circle cx="68.72" cy="403.03" r="0.8" fill="#1d3d22"/><circle cx="71.04" cy="402.85" r="0.8" fill="#1d3d22"/><circle cx="73.36" cy="402.87" r="0.8" fill="#1d3d22"/><circle cx="75.68" cy="403.12" r="0.8" fill="#1d3d22"/><circle cx="78.00" cy="403.10" r="0.8" fill="#1d3d22"/><circle cx="80.32" cy="403.08" r="0.8" fill="#1d3d22"/><circle cx="82.64" cy="403.10" r="0.8" fill="#1d3d22"/><circle cx="84.96" cy="402.97" r="0.8" fill="#1d3d22"/><circle cx="87.28" cy="403.10" r="0.8" fill="#1d3d22"/><circle cx="89.60" cy="403.03" r="0.8" fill="#1d3d22"/><circle cx="91.92" cy="403.15" r="0.8" fill="#1d3d22"/><circle cx="94.24" cy="402.84" r="0.8" fill="#1d3d22"/><circle cx="96.56" cy="403.06" r="0.8" fill="#1d3d22"/><circle cx="98.88" cy="403.02" r="0.8" fill="#1d3d22"/><circle cx="101.20" cy="402.97" r="0.8" fill="#1d3d22"/><circle cx="103.52" cy="402.84" r="0.8" fill="#1d3d22"/><circle cx="105.84" cy="403.03" r="0.8" fill="#1d3d22"/><circle cx="108.16" cy="402.83" r="0.8" fill="#1d3d22"/><circle cx="110.48" cy="403.00" r="0.8" fill="#1d3d22"/><circle cx="112.80" cy="402.99" r="0.8" fill="#1d3d22"/><circle cx="115.12" cy="402.99" r="0.8" fill="#1d3d22"/><circle cx="117.44" cy="403.19" r="0.8" fill="#1d3d22"/><circle cx="119.76" cy="403.02" r="0.8" fill="#1d3d22"/><circle cx="122.08" cy="403.13" r="0.8" fill="#1d3d22"/><circle cx="124.40" cy="403.20" r="0.8" fill="#1d3d22"/><circle cx="126.72" cy="402.88" r="0.8" fill="#1d3d22"/><circle cx="129.04" cy="403.13" r="0.8" fill="#1d3d22"/><circle cx="131.36" cy="403.01" r="0.8" fill="#1d3d22"/><circle cx="133.68" cy="402.91" r="0.8" fill="#1d3d22"/><circle cx="136.00" cy="402.98" r="0.8" fill="#1d3d22"/><circle cx="138.32" cy="403.07" r="0.8" fill="#1d3d22"/><circle cx="140.64" cy="402.99" r="0.8" fill="#1d3d22"/><circle cx="142.96" cy="402.98" r="0.8" fill="#1d3d22"/><circle cx="145.28" cy="402.89" r="0.8" fill="#1d3d22"/><circle cx="147.60" cy="403.16" r="0.8" fill="#1d3d22"/><circle cx="149.92" cy="402.98" r="0.8" fill="#1d3d22"/><circle cx="152.24" cy="403.10" r="0.8" fill="#1d3d22"/><circle cx="154.56" cy="403.09" r="0.8" fill="#1d3d22"/><circle cx="156.88" cy="402.89" r="0.8" fill="#1d3d22"/><circle cx="159.20" cy="403.00" r="0.8" fill="#1d3d22"/><circle cx="161.52" cy="402.98" r="0.8" fill="#1d3d22"/><circle cx="163.84" cy="402.90" r="0.8" fill="#1d3d22"/><circle cx="166.16" cy="402.84" r="0.8" fill="#1d3d22"/><circle cx="168.48" cy="403.02" r="0.8" fill="#1d3d22"/><circle cx="170.80" cy="402.95" r="0.8" fill="#1d3d22"/><circle cx="173.12" cy="403.00" r="0.8" fill="#1d3d22"/><circle cx="175.44" cy="403.00" r="0.8" fill="#1d3d22"/><circle cx="177.76" cy="402.92" r="0.8" fill="#1d3d22"/><circle cx="180.08" cy="403.02" r="0.8" fill="#1d3d22"/><circle cx="182.40" cy="402.99" r="0.8" fill="#1d3d22"/><circle cx="184.72" cy="403.01" r="0.8" fill="#1d3d22"/><circle cx="187.04" cy="402.82" r="0.8" fill="#1d3d22"/><circle cx="189.36" cy="402.92" r="0.8" fill="#1d3d22"/><circle cx="191.68" cy="402.85" r="0.8" fill="#1d3d22"/><circle cx="194.00" cy="402.82" r="0.8" fill="#1d3d22"/><circle cx="196.32" cy="403.10" r="0.8" fill="#1d3d22"/><circle cx="198.64" cy="402.98" r="0.8" fill="#1d3d22"/><circle cx="200.96" cy="402.82" r="0.8" fill="#1d3d22"/><circle cx="203.28" cy="402.86" r="0.8" fill="#1d3d22"/><circle cx="205.60" cy="403.15" r="0.8" fill="#1d3d22"/><circle cx="207.92" cy="403.15" r="0.8" fill="#1d3d22"/><circle cx="210.24" cy="403.02" r="0.8" fill="#1d3d22"/><circle cx="212.56" cy="403.17" r="0.8" fill="#1d3d22"/><circle cx="214.88" cy="403.10" r="0.8" fill="#1d3d22"/><circle cx="217.20" cy="403.17" r="0.8" fill="#1d3d22"/><circle cx="219.52" cy="402.93" r="0.8" fill="#1d3d22"/><circle cx="221.84" cy="402.89" r="0.8" fill="#1d3d22"/><circle cx="224.16" cy="402.84" r="0.8" fill="#1d3d22"/><circle cx="226.48" cy="403.14" r="0.8" fill="#1d3d22"/><circle cx="228.80" cy="402.91" r="0.8" fill="#1d3d22"/><circle cx="231.12" cy="402.94" r="0.8" fill="#1d3d22"/><circle cx="233.44" cy="403.14" r="0.8" fill="#1d3d22"/><circle cx="235.76" cy="402.85" r="0.8" fill="#1d3d22"/><circle cx="238.08" cy="402.81" r="0.8" fill="#1d3d22"/><circle cx="240.40" cy="403.11" r="0.8" fill="#1d3d22"/><circle cx="242.72" cy="402.82" r="0.8" fill="#1d3d22"/><circle cx="245.04" cy="403.04" r="0.8" fill="#1d3d22"/><circle cx="247.36" cy="403.01" r="0.8" fill="#1d3d22"/><circle cx="249.68" cy="402.80" r="0.8" fill="#1d3d22"/><circle cx="252.00" cy="402.87" r="0.8" fill="#1d3d22"/><circle cx="254.32" cy="403.14" r="0.8" fill="#1d3d22"/><circle cx="256.64" cy="403.03" r="0.8" fill="#1d3d22"/><circle cx="258.96" cy="402.99" r="0.8" fill="#1d3d22"/><circle cx="261.28" cy="403.06" r="0.8" fill="#1d3d22"/><circle cx="263.60" cy="403.12" r="0.8" fill="#1d3d22"/><circle cx="265.92" cy="403.07" r="0.8" fill="#1d3d22"/><circle cx="268.24" cy="402.91" r="0.8" fill="#1d3d22"/><circle cx="270.56" cy="403.19" r="0.8" fill="#1d3d22"/><circle cx="272.88" cy="402.98" r="0.8" fill="#1d3d22"/><circle cx="275.20" cy="403.02" r="0.8" fill="#1d3d22"/><circle cx="277.52" cy="403.19" r="0.8" fill="#1d3d22"/><circle cx="279.84" cy="403.07" r="0.8" fill="#1d3d22"/><circle cx="282.16" cy="402.95" r="0.8" fill="#1d3d22"/><circle cx="284.48" cy="403.00" r="0.8" fill="#1d3d22"/><circle cx="286.80" cy="403.17" r="0.8" fill="#1d3d22"/><circle cx="289.12" cy="402.81" r="0.8" fill="#1d3d22"/><circle cx="291.44" cy="402.88" r="0.8" fill="#1d3d22"/><circle cx="293.76" cy="402.81" r="0.8" fill="#1d3d22"/><circle cx="296.08" cy="403.16" r="0.8" fill="#1d3d22"/><circle cx="298.40" cy="403.09" r="0.8" fill="#1d3d22"/><circle cx="300.72" cy="403.18" r="0.8" fill="#1d3d22"/><circle cx="303.04" cy="402.89" r="0.8" fill="#1d3d22"/><circle cx="305.36" cy="403.09" r="0.8" fill="#1d3d22"/><circle cx="307.68" cy="403.15" r="0.8" fill="#1d3d22"/><circle cx="310.00" cy="403.03" r="0.8" fill="#1d3d22"/><circle cx="312.32" cy="402.84" r="0.8" fill="#1d3d22"/><circle cx="314.64" cy="402.87" r="0.8" fill="#1d3d22"/><circle cx="316.96" cy="403.10" r="0.8" fill="#1d3d22"/><circle cx="319.28" cy="403.14" r="0.8" fill="#1d3d22"/><circle cx="321.60" cy="402.83" r="0.8" fill="#1d3d22"/><circle cx="323.92" cy="402.97" r="0.8" fill="#1d3d22"/><circle cx="326.24" cy="402.92" r="0.8" fill="#1d3d22"/><circle cx="328.56" cy="403.16" r="0.8" fill="#1d3d22"/><circle cx="330.88" cy="403.18" r="0.8" fill="#1d3d22"/><circle cx="333.20" cy="402.92" r="0.8" fill="#1d3d22"/><circle cx="335.52" cy="403.03" r="0.8" fill="#1d3d22"/><circle cx="337.84" cy="403.17" r="0.8" fill="#1d3d22"/><circle cx="340.16" cy="402.82" r="0.8" fill="#1d3d22"/><circle cx="342.48" cy="402.95" r="0.8" fill="#1d3d22"/><circle cx="344.80" cy="402.88" r="0.8" fill="#1d3d22"/><circle cx="347.12" cy="403.17" r="0.8" fill="#1d3d22"/><circle cx="349.44" cy="402.86" r="0.8" fill="#1d3d22"/><circle cx="351.76" cy="403.17" r="0.8" fill="#1d3d22"/><circle cx="354.08" cy="402.85" r="0.8" fill="#1d3d22"/><circle cx="356.40" cy="403.02" r="0.8" fill="#1d3d22"/><circle cx="358.72" cy="403.06" r="0.8" fill="#1d3d22"/><circle cx="361.04" cy="402.98" r="0.8" fill="#1d3d22"/><circle cx="363.36" cy="402.83" r="0.8" fill="#1d3d22"/><circle cx="365.68" cy="403.09" r="0.8" fill="#1d3d22"/><circle cx="368.00" cy="403.15" r="0.8" fill="#1d3d22"/><circle cx="370.32" cy="402.99" r="0.8" fill="#1d3d22"/><circle cx="372.64" cy="403.10" r="0.8" fill="#1d3d22"/><circle cx="374.96" cy="403.16" r="0.8" fill="#1d3d22"/><circle cx="377.28" cy="403.14" r="0.8" fill="#1d3d22"/><circle cx="379.60" cy="403.18" r="0.8" fill="#1d3d22"/><circle cx="381.92" cy="403.12" r="0.8" fill="#1d3d22"/><circle cx="384.24" cy="403.08" r="0.8" fill="#1d3d22"/><circle cx="386.56" cy="403.08" r="0.8" fill="#1d3d22"/><circle cx="388.88" cy="402.90" r="0.8" fill="#1d3d22"/><circle cx="391.20" cy="403.08" r="0.8" fill="#1d3d22"/><circle cx="393.52" cy="403.00" r="0.8" fill="#1d3d22"/><circle cx="395.84" cy="403.13" r="0.8" fill="#1d3d22"/><circle cx="398.16" cy="403.06" r="0.8" fill="#1d3d22"/><circle cx="400.48" cy="403.19" r="0.8" fill="#1d3d22"/><circle cx="402.80" cy="403.10" r="0.8" fill="#1d3d22"/><circle cx="405.12" cy="403.19" r="0.8" fill="#1d3d22"/><circle cx="407.44" cy="402.91" r="0.8" fill="#1d3d22"/><circle cx="409.76" cy="402.98" r="0.8" fill="#1d3d22"/><circle cx="412.08" cy="403.12" r="0.8" fill="#1d3d22"/><circle cx="414.40" cy="403.01" r="0.8" fill="#1d3d22"/><circle cx="416.72" cy="402.83" r="0.8" fill="#1d3d22"/><circle cx="419.04" cy="403.16" r="0.8" fill="#1d3d22"/><circle cx="421.36" cy="402.87" r="0.8" fill="#1d3d22"/><circle cx="423.68" cy="403.03" r="0.8" fill="#1d3d22"/><circle cx="426.00" cy="403.00" r="0.8" fill="#1d3d22"/><circle cx="428.32" cy="402.87" r="0.8" fill="#1d3d22"/><circle cx="430.64" cy="403.04" r="0.8" fill="#1d3d22"/><circle cx="432.96" cy="403.00" r="0.8" fill="#1d3d22"/><circle cx="435.28" cy="402.92" r="0.8" fill="#1d3d22"/><circle cx="437.60" cy="402.81" r="0.8" fill="#1d3d22"/><circle cx="439.92" cy="403.06" r="0.8" fill="#1d3d22"/><circle cx="442.24" cy="402.87" r="0.8" fill="#1d3d22"/><circle cx="444.56" cy="402.92" r="0.8" fill="#1d3d22"/><circle cx="446.88" cy="402.95" r="0.8" fill="#1d3d22"/><circle cx="449.20" cy="403.04" r="0.8" fill="#1d3d22"/><circle cx="451.52" cy="403.06" r="0.8" fill="#1d3d22"/><circle cx="453.84" cy="403.18" r="0.8" fill="#1d3d22"/><circle cx="456.16" cy="403.15" r="0.8" fill="#1d3d22"/><circle cx="458.48" cy="403.17" r="0.8" fill="#1d3d22"/><circle cx="460.80" cy="402.90" r="0.8" fill="#1d3d22"/><circle cx="463.12" cy="403.10" r="0.8" fill="#1d3d22"/><circle cx="465.44" cy="403.13" r="0.8" fill="#1d3d22"/><circle cx="467.76" cy="403.17" r="0.8" fill="#1d3d22"/><circle cx="469.00" cy="403.00" r="0.8" fill="#1d3d22"/><circle cx="471.00" cy="390.40" r="0.8" fill="#1d3d22"/><circle cx="473.50" cy="337.30" r="0.8" fill="#1d3d22"/><circle cx="475.90" cy="330.50" r="0.8" fill="#1d3d22"/><circle cx="478.60" cy="338.00" r="0.8" fill="#1d3d22"/><circle cx="481.00" cy="340.30" r="0.8" fill="#1d3d22"/><circle cx="482.80" cy="349.20" r="0.8" fill="#1d3d22"/><circle cx="485.60" cy="401.00" r="0.8" fill="#1d3d22"/><circle cx="486.32" cy="402.86" r="0.8" fill="#1d3d22"/><circle cx="488.64" cy="402.85" r="0.8" fill="#1d3d22"/><circle cx="490.96" cy="402.93" r="0.8" fill="#1d3d22"/><circle cx="493.28" cy="403.09" r="0.8" fill="#1d3d22"/><circle cx="495.60" cy="403.10" r="0.8" fill="#1d3d22"/><circle cx="497.92" cy="403.08" r="0.8" fill="#1d3d22"/><circle cx="500.24" cy="403.02" r="0.8" fill="#1d3d22"/><circle cx="502.56" cy="403.14" r="0.8" fill="#1d3d22"/><circle cx="504.88" cy="403.02" r="0.8" fill="#1d3d22"/><circle cx="507.20" cy="403.09" r="0.8" fill="#1d3d22"/><circle cx="509.52" cy="402.82" r="0.8" fill="#1d3d22"/><circle cx="511.84" cy="402.81" r="0.8" fill="#1d3d22"/><circle cx="514.16" cy="402.98" r="0.8" fill="#1d3d22"/><circle cx="516.48" cy="403.10" r="0.8" fill="#1d3d22"/><circle cx="518.80" cy="402.81" r="0.8" fill="#1d3d22"/><circle cx="521.12" cy="403.08" r="0.8" fill="#1d3d22"/><circle cx="523.44" cy="403.06" r="0.8" fill="#1d3d22"/><circle cx="525.76" cy="403.20" r="0.8" fill="#1d3d22"/><circle cx="528.08" cy="403.05" r="0.8" fill="#1d3d22"/><circle cx="530.40" cy="403.01" r="0.8" fill="#1d3d22"/><circle cx="532.72" cy="403.00" r="0.8" fill="#1d3d22"/><circle cx="535.04" cy="403.12" r="0.8" fill="#1d3d22"/><circle cx="536.20" cy="403.10" r="0.8" fill="#1d3d22"/><circle cx="538.40" cy="355.20" r="0.8" fill="#1d3d22"/><circle cx="540.30" cy="350.50" r="0.8" fill="#1d3d22"/><circle cx="542.10" cy="348.10" r="0.8" fill="#1d3d22"/><circle cx="544.60" cy="345.50" r="0.8" fill="#1d3d22"/><circle cx="546.80" cy="354.30" r="0.8" fill="#1d3d22"/><circle cx="550.10" cy="401.80" r="0.8" fill="#1d3d22"/><circle cx="551.28" cy="403.00" r="0.8" fill="#1d3d22"/><circle cx="553.60" cy="403.20" r="0.8" fill="#1d3d22"/><circle cx="555.92" cy="403.09" r="0.8" fill="#1d3d22"/><circle cx="558.24" cy="403.16" r="0.8" fill="#1d3d22"/><circle cx="560.56" cy="403.04" r="0.8" fill="#1d3d22"/><circle cx="562.88" cy="403.18" r="0.8" fill="#1d3d22"/><circle cx="565.20" cy="403.19" r="0.8" fill="#1d3d22"/><circle cx="567.52" cy="403.08" r="0.8" fill="#1d3d22"/><circle cx="569.84" cy="403.11" r="0.8" fill="#1d3d22"/><circle cx="572.16" cy="402.97" r="0.8" fill="#1d3d22"/><circle cx="574.48" cy="402.99" r="0.8" fill="#1d3d22"/><circle cx="576.80" cy="402.90" r="0.8" fill="#1d3d22"/><circle cx="579.12" cy="402.94" r="0.8" fill="#1d3d22"/><circle cx="581.44" cy="402.91" r="0.8" fill="#1d3d22"/><circle cx="583.76" cy="402.85" r="0.8" fill="#1d3d22"/><circle cx="586.08" cy="403.04" r="0.8" fill="#1d3d22"/><circle cx="588.40" cy="403.07" r="0.8" fill="#1d3d22"/><circle cx="590.72" cy="402.81" r="0.8" fill="#1d3d22"/><circle cx="593.04" cy="403.14" r="0.8" fill="#1d3d22"/><circle cx="595.36" cy="402.91" r="0.8" fill="#1d3d22"/><circle cx="597.68" cy="402.94" r="0.8" fill="#1d3d22"/><circle cx="600.00" cy="403.18" r="0.8" fill="#1d3d22"/><circle cx="602.32" cy="402.87" r="0.8" fill="#1d3d22"/><circle cx="604.64" cy="402.84" r="0.8" fill="#1d3d22"/><circle cx="606.96" cy="402.95" r="0.8" fill="#1d3d22"/><circle cx="609.28" cy="402.91" r="0.8" fill="#1d3d22"/><circle cx="610.60" cy="403.10" r="0.8" fill="#1d3d22"/><circle cx="613.10" cy="371.40" r="0.8" fill="#1d3d22"/><circle cx="615.30" cy="348.30" r="0.8" fill="#1d3d22"/><circle cx="617.70" cy="344.00" r="0.8" fill="#1d3d22"/><circle cx="620.10" cy="350.90" r="0.8" fill="#1d3d22"/><circle cx="622.40" cy="351.50" r="0.8" fill="#1d3d22"/><circle cx="624.80" cy="380.40" r="0.8" fill="#1d3d22"/><circle cx="627.10" cy="400.00" r="0.8" fill="#1d3d22"/><circle cx="628.90" cy="403.10" r="0.8" fill="#1d3d22"/><circle cx="630.16" cy="402.88" r="0.8" fill="#1d3d22"/><circle cx="632.48" cy="403.14" r="0.8" fill="#1d3d22"/><circle cx="634.80" cy="402.99" r="0.8" fill="#1d3d22"/><circle cx="637.12" cy="403.00" r="0.8" fill="#1d3d22"/><circle cx="639.44" cy="402.87" r="0.8" fill="#1d3d22"/><circle cx="641.76" cy="402.88" r="0.8" fill="#1d3d22"/><line x1="54.80" y1="403.4" x2="643.8" y2="403.4" stroke="#2c4f2c" stroke-width="0.9"/><rect x="21.9" y="418.9" width="5" height="5" fill="#2f6fba" rx="0.6"/><text x="28.4" y="423.6" font-size="6.3" fill="#333" stroke="#333" stroke-width="0.12" font-family="Liberation Sans">Downlink (SU + MU)</text><rect x="94.7" y="418.9" width="5" height="5" fill="#f58a1f" rx="0.6"/><text x="101.5" y="423.6" font-size="6.3" fill="#333" stroke="#333" stroke-width="0.12" font-family="Liberation Sans">Uplink</text><rect x="129.3" y="418.9" width="5" height="5" fill="#2f8a3a" rx="0.6"/><text x="136" y="423.6" font-size="6.3" fill="#333" stroke="#333" stroke-width="0.12" font-family="Liberation Sans">MU Downlink</text><rect x="0" y="426.5" width="690" height="3" fill="#3e6c3e"/><path d="M521.90,319.10 C523.18,319.40 526.93,319.85 529.60,320.90 C532.27,321.95 535.12,323.27 537.90,325.40 C540.68,327.53 543.73,330.68 546.30,333.70 C548.87,336.72 551.08,339.78 553.30,343.50 C555.52,347.22 557.73,352.25 559.60,356.00 C561.47,359.75 562.83,362.65 564.50,366.00 C566.17,369.35 568.08,372.00 569.60,376.10 C571.12,380.20 572.67,385.77 573.60,390.60 C574.53,395.43 574.90,400.70 575.20,405.10 C575.50,409.50 575.80,414.22 575.40,417.00 C575.00,419.78 574.53,420.92 572.80,421.80 C571.07,422.68 567.42,422.27 565.00,422.30 C562.58,422.33 561.83,422.58 558.30,422.00 C554.77,421.42 547.82,420.55 543.80,418.80 C539.78,417.05 537.15,414.32 534.20,411.50 C531.25,408.68 528.52,405.65 526.10,401.90 C523.68,398.15 521.28,393.30 519.70,389.00 C518.12,384.70 517.23,380.43 516.60,376.10 C515.97,371.77 515.72,367.50 515.90,363.00 C516.08,358.50 516.58,353.75 517.70,349.10 C518.82,344.45 520.62,339.28 522.60,335.10 C524.58,330.92 528.43,325.85 529.60,324.00" fill="none" stroke="#e8131b" stroke-width="3.5" stroke-linecap="round" stroke-linejoin="round"/><path d="M601.10,327.70 C601.92,327.93 604.25,328.52 606.00,329.10 C607.75,329.68 609.27,329.92 611.60,331.20 C613.93,332.48 617.22,334.58 620.00,336.80 C622.78,339.02 625.52,341.82 628.30,344.50 C631.08,347.18 634.23,350.45 636.70,352.90 C639.17,355.35 640.48,355.70 643.10,359.20 C645.72,362.70 649.78,368.98 652.40,373.90 C655.02,378.82 657.12,383.78 658.80,388.70 C660.48,393.62 661.87,399.42 662.50,403.40 C663.13,407.38 663.37,409.83 662.60,412.60 C661.83,415.37 659.92,418.00 657.90,420.00 C655.88,422.00 653.88,423.53 650.50,424.60 C647.12,425.67 641.90,426.25 637.60,426.40 C633.30,426.55 628.68,425.95 624.70,425.50 C620.72,425.05 616.98,424.53 613.70,423.70 C610.42,422.87 608.07,422.13 605.00,420.50 C601.93,418.87 597.97,416.48 595.30,413.90 C592.63,411.32 590.48,407.53 589.00,405.00 C587.52,402.47 587.07,403.08 586.40,398.70 C585.73,394.32 585.00,384.82 585.00,378.70 C585.00,372.58 585.70,366.88 586.40,362.00 C587.10,357.12 588.03,353.37 589.20,349.40 C590.37,345.43 592.00,341.35 593.40,338.20 C594.80,335.05 596.32,332.25 597.60,330.50 C598.88,328.75 600.52,328.17 601.10,327.70" fill="none" stroke="#e8131b" stroke-width="3.5" stroke-linecap="round" stroke-linejoin="round"/></svg>
</div></body></html>
